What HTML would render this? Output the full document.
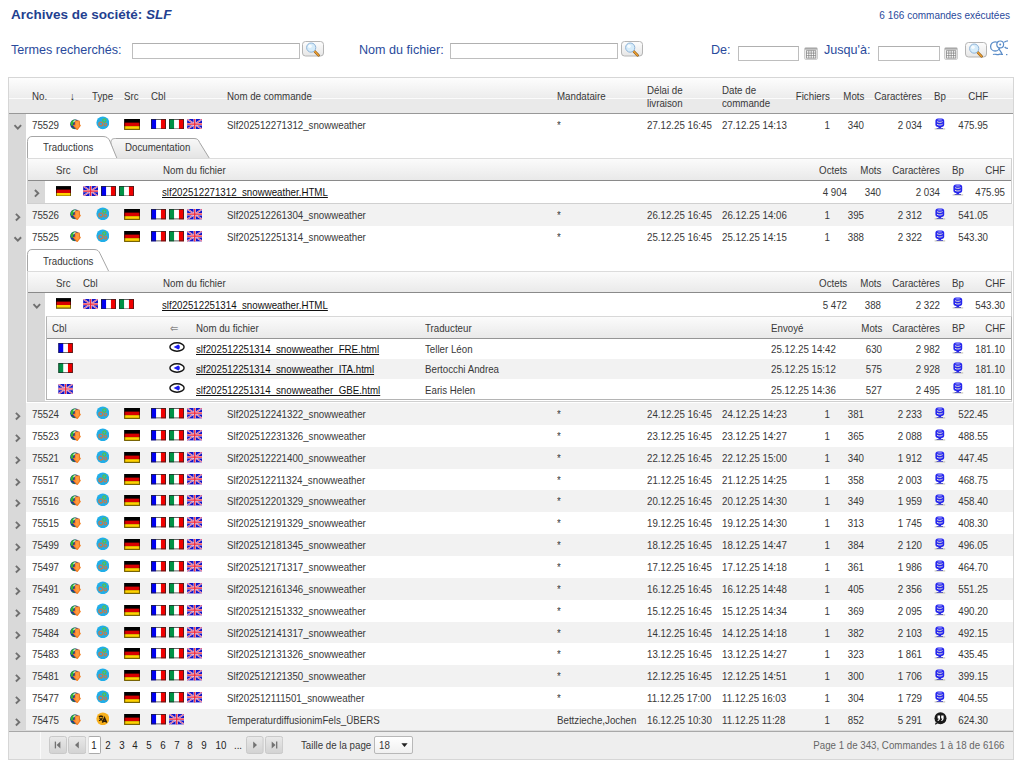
<!DOCTYPE html>
<html lang="fr"><head><meta charset="utf-8"><title>Archives de société: SLF</title>
<style>
html,body{margin:0;padding:0;background:#fff}
body{width:1024px;height:768px;position:relative;overflow:hidden;font-family:"Liberation Sans",sans-serif}
.a{position:absolute;display:block}
.t{position:absolute;white-space:nowrap;font-size:10.8px;line-height:14px;height:14px;color:#383838;transform:scaleX(.9);transform-origin:0 50%}
.t.r{transform-origin:100% 50%}
.t.c{transform-origin:50% 50%;text-align:center;color:#222}
.t.u{text-decoration:underline;color:#111}
.title{position:absolute;font-weight:bold;font-size:13.5px;line-height:18px;color:#233f90;white-space:nowrap}
.cnt{position:absolute;font-size:10px;line-height:14px;color:#2a4a9c;white-space:nowrap}
.lbl{position:absolute;font-size:12.6px;line-height:16px;color:#2a4a9c;white-space:nowrap}
.inp{position:absolute;box-sizing:border-box;margin:0;padding:0;outline:0;border-radius:0;-webkit-appearance:none;appearance:none;font:10px "Liberation Sans",sans-serif;border:1.4px solid #bebebe;border-top-color:#b0b0b0;background:#fff}
.hdr{background:linear-gradient(#fdfdfd 0,#ececec 20px,#fbfbfb 20px,#fbfbfb 21px,#eaeaea 21px,#eaeaea 100%)}
.nh{background:linear-gradient(#fcfcfc 0,#e9e9e9 100%)}
</style></head>
<body>
<div class="title" style="left:11px;top:6px">Archives de société: <i>SLF</i></div>
<div class="cnt" style="right:14px;top:9px">6 166 commandes exécutées</div>
<div class="lbl" style="left:11px;top:42px">Termes recherchés:</div>
<input class="inp" type="text" style="left:131.6px;top:43px;width:168px;height:15.5px">
<svg class="a" style="left:302px;top:41px" width="24" height="18" viewBox="0 0 24 18"><defs><linearGradient id="g302" x1="0" y1="0" x2="0" y2="1"><stop offset="0" stop-color="#fdfdfd"/><stop offset="1" stop-color="#e6e6e6"/></linearGradient></defs><rect x=".5" y=".5" width="21" height="14.5" rx="3" fill="url(#g302)" stroke="#b4b4b4"/><path d="M12.2 9.8L16.6 14.4" stroke="#8a5a18" stroke-width="2.6" stroke-linecap="round"/><path d="M12.2 9.8L16.4 14.2" stroke="#f0a030" stroke-width="1.4" stroke-linecap="round"/><circle cx="9.2" cy="6.6" r="4.6" fill="#d6ecfa" stroke="#8fb4d8" stroke-width="1"/><circle cx="8" cy="5.2" r="1.8" fill="#fff" fill-opacity=".8"/></svg>
<div class="lbl" style="left:359px;top:42px">Nom du fichier:</div>
<input class="inp" type="text" style="left:449.6px;top:43px;width:168px;height:15.5px">
<svg class="a" style="left:621px;top:41px" width="24" height="18" viewBox="0 0 24 18"><defs><linearGradient id="g621" x1="0" y1="0" x2="0" y2="1"><stop offset="0" stop-color="#fdfdfd"/><stop offset="1" stop-color="#e6e6e6"/></linearGradient></defs><rect x=".5" y=".5" width="21" height="14.5" rx="3" fill="url(#g621)" stroke="#b4b4b4"/><path d="M12.2 9.8L16.6 14.4" stroke="#8a5a18" stroke-width="2.6" stroke-linecap="round"/><path d="M12.2 9.8L16.4 14.2" stroke="#f0a030" stroke-width="1.4" stroke-linecap="round"/><circle cx="9.2" cy="6.6" r="4.6" fill="#d6ecfa" stroke="#8fb4d8" stroke-width="1"/><circle cx="8" cy="5.2" r="1.8" fill="#fff" fill-opacity=".8"/></svg>
<div class="lbl" style="left:711px;top:42px">De:</div>
<input class="inp" type="text" style="left:737.5px;top:45.5px;width:61.5px;height:15px">
<svg class="a" style="left:804px;top:47px" width="14" height="13" viewBox="0 0 14 13"><rect x=".5" y=".5" width="13" height="12" rx="1.5" fill="#ececec" stroke="#cfcfcf"/><rect x="1" y="1" width="12" height="1.6" fill="#a8a8a8"/><rect x="2.4" y="3.6" width="9.4" height="7.6" fill="#fff"/><path d="M2.4 6.1H11.8M2.4 8.6H11.8M2.4 11.1H11.8M4.8 3.6V11.2M7.2 3.6V11.2M9.6 3.6V11.2M11.7 3.6V11.2M2.5 3.6V11.2M2.4 3.7H11.8" stroke="#7a7a7a" stroke-width=".7"/></svg>
<div class="lbl" style="left:824px;top:42px">Jusqu'à:</div>
<input class="inp" type="text" style="left:878px;top:45.5px;width:61.5px;height:15px">
<svg class="a" style="left:944px;top:47px" width="14" height="13" viewBox="0 0 14 13"><rect x=".5" y=".5" width="13" height="12" rx="1.5" fill="#ececec" stroke="#cfcfcf"/><rect x="1" y="1" width="12" height="1.6" fill="#a8a8a8"/><rect x="2.4" y="3.6" width="9.4" height="7.6" fill="#fff"/><path d="M2.4 6.1H11.8M2.4 8.6H11.8M2.4 11.1H11.8M4.8 3.6V11.2M7.2 3.6V11.2M9.6 3.6V11.2M11.7 3.6V11.2M2.5 3.6V11.2M2.4 3.7H11.8" stroke="#7a7a7a" stroke-width=".7"/></svg>
<svg class="a" style="left:965px;top:42px" width="24" height="18" viewBox="0 0 24 18"><defs><linearGradient id="g965" x1="0" y1="0" x2="0" y2="1"><stop offset="0" stop-color="#fdfdfd"/><stop offset="1" stop-color="#e6e6e6"/></linearGradient></defs><rect x=".5" y=".5" width="21" height="14.5" rx="3" fill="url(#g965)" stroke="#b4b4b4"/><path d="M12.2 9.8L16.6 14.4" stroke="#8a5a18" stroke-width="2.6" stroke-linecap="round"/><path d="M12.2 9.8L16.4 14.2" stroke="#f0a030" stroke-width="1.4" stroke-linecap="round"/><circle cx="9.2" cy="6.6" r="4.6" fill="#d6ecfa" stroke="#8fb4d8" stroke-width="1"/><circle cx="8" cy="5.2" r="1.8" fill="#fff" fill-opacity=".8"/></svg>
<svg class="a" style="left:989px;top:40px" width="19" height="17" viewBox="0 0 19 17"><circle cx="6.2" cy="6.4" r="4.6" fill="none" stroke="#5a8cc8" stroke-width="1.3"/><circle cx="11.2" cy="4.4" r="3.4" fill="#fff" stroke="#5a8cc8" stroke-width="1.2"/><circle cx="11.2" cy="4.4" r="1" fill="#5a8cc8"/><path d="M15.2 2.2C16.4 1.2 17.6 .8 19 .8M15.6 7C16.6 8 17.8 8.4 19 8.4" stroke="#5a8cc8" stroke-width="1.2" fill="none"/><path d="M9.6 8.4L13 13.6M4 14.6C6 13.4 8 15.4 10 14.4 11.2 13.8 12.6 14.6 14 14.4" stroke="#5a8cc8" stroke-width="1.2" fill="none"/><rect x="17" y="14" width="1.4" height="1.2" fill="#5a8cc8"/></svg>
<div class="a" style="left:8px;top:77px;width:1006px;height:683px;border:1px solid #d6d6d6;box-sizing:border-box;background:#fff"></div>
<div class="a hdr" style="left:9px;top:78px;width:1004px;height:35px"></div>
<div class="a" style="left:9px;top:113px;width:1004px;height:1px;background:#989898;"></div>
<span class="t " style="left:31.8px;top:88.9px;">No.</span>
<span class="t " style="left:70.3px;top:88.9px;font-size:10.5px;color:#222">↓</span>
<span class="t " style="left:92.3px;top:88.9px;">Type</span>
<span class="t " style="left:124.3px;top:88.9px;">Src</span>
<span class="t " style="left:150.8px;top:88.9px;">Cbl</span>
<span class="t " style="left:227.3px;top:88.9px;">Nom de commande</span>
<span class="t " style="left:556.8px;top:88.9px;">Mandataire</span>
<span class="t " style="left:647.3px;top:82.7px;">Délai de</span>
<span class="t " style="left:647.3px;top:95.6px;">livraison</span>
<span class="t " style="left:722.3px;top:82.7px;">Date de</span>
<span class="t " style="left:722.3px;top:95.6px;">commande</span>
<span class="t r " style="right:193.8px;top:88.9px;">Fichiers</span>
<span class="t r " style="right:159.8px;top:88.9px;">Mots</span>
<span class="t r " style="right:101.8px;top:88.9px;">Caractères</span>
<span class="t " style="left:934.3px;top:88.9px;">Bp</span>
<span class="t r " style="right:35.8px;top:88.9px;">CHF</span>
<div class="a" style="left:9px;top:114px;width:17px;height:617px;background:#d9d9d9;"></div>
<span class="t " style="left:31.8px;top:117.5px;">75529</span>
<svg class="a" style="left:69.6px;top:118.9px" width="12" height="12" viewBox="0 0 12 12"><circle cx="5.1" cy="5.3" r="4.9" fill="#1a2f9a"/><path d="M.6 4C1.4 1.6 3.6.3 5.8.5 5.2 2 4.2 2.8 3.4 4.2 2.8 5.4 3.2 6.6 2 7.2 1 6.4.4 5.2.6 4Z" fill="#35b431"/><path d="M3.2 2.4C3.8 1.4 5 1 6.2 1.2 5.6 2.2 4.6 2.8 3.6 3.6Z" fill="#c8f0ff"/><path d="M1.6 8.4C3 8.2 4.2 9 4.8 10 3.6 10 2.4 9.4 1.6 8.4Z" fill="#2a8a3a"/><path d="M4.7 2.4C4.7 1.8 5.1 1.5 5.7 1.5H8.9C9.5 1.5 9.9 1.9 9.9 2.5V5.8H10.3C10.9 5.8 11 6.4 10.6 6.9L7.8 10.7C7.4 11.1 6.9 11.1 6.5 10.7L3.3 6.9C2.9 6.4 3.1 5.8 3.7 5.8H4.7Z" fill="#f47e20"/><path d="M5.7 2.6H8.9V6.7H9.5L7.2 9.7 4.7 6.7H5.7Z" fill="#ff9a40"/></svg>
<svg class="a" style="left:95.7px;top:116.2px" width="13.6" height="13.6" viewBox="-.1 -.1 14.2 14.2"><circle cx="7" cy="7" r="6.7" fill="#20aee8"/><circle cx="8.6" cy="4.6" r="1.7" fill="none" stroke="#56c24a" stroke-width="1.3"/><circle cx="4.9" cy="8.3" r="2" fill="none" stroke="#c07c50" stroke-width="1.4"/><circle cx="9.7" cy="8.9" r="1.4" fill="none" stroke="#c07c50" stroke-width="1.1"/></svg>
<svg class="a" style="left:124px;top:118.9px" width="16.2" height="10.8" viewBox="0 0 16 11"><rect width="16" height="11" fill="#000"/><rect y="3.7" width="16" height="3.6" fill="#d80000"/><rect y="7.3" width="16" height="3.7" fill="#ffd200"/><rect x=".5" y=".5" width="15" height="10" fill="none" stroke="#000" stroke-opacity=".55"/></svg>
<svg class="a" style="left:151px;top:119.1px" width="15" height="10.4" viewBox="0 0 16 11"><rect width="16" height="11" fill="#fff"/><rect width="5.4" height="11" fill="#0000f0"/><rect x="10.6" width="5.4" height="11" fill="#f00000"/><rect x=".5" y=".5" width="15" height="10" fill="none" stroke="#222" stroke-opacity=".75"/></svg>
<svg class="a" style="left:169px;top:119.1px" width="15" height="10.4" viewBox="0 0 16 11"><rect width="16" height="11" fill="#fff"/><rect width="5.4" height="11" fill="#009246"/><rect x="10.6" width="5.4" height="11" fill="#f00000"/><rect x=".5" y=".5" width="15" height="10" fill="none" stroke="#222" stroke-opacity=".75"/></svg>
<svg class="a" style="left:186.6px;top:119.1px" width="15.4" height="10.4" viewBox="0 0 16 11"><rect width="16" height="11" fill="#1414c8"/><path d="M0 0L16 11M16 0L0 11" stroke="#d8d0f4" stroke-width="1.7"/><path d="M0 0L16 11M16 0L0 11" stroke="#f0506a" stroke-width=".9"/><path d="M8 0V11M0 5.5H16" stroke="#ecd8ec" stroke-width="2.5"/><path d="M8 0V11M0 5.5H16" stroke="#f02838" stroke-width="1.3"/></svg>
<span class="t " style="left:227.3px;top:117.5px;">Slf202512271312_snowweather</span>
<span class="t " style="left:556.8px;top:117.5px;">*</span>
<span class="t " style="left:647.3px;top:117.5px;">27.12.25 16:45</span>
<span class="t " style="left:722.3px;top:117.5px;">27.12.25 14:13</span>
<span class="t r " style="right:193.8px;top:117.5px;">1</span>
<span class="t r " style="right:159.8px;top:117.5px;">340</span>
<span class="t r " style="right:101.8px;top:117.5px;">2 034</span>
<svg class="a" style="left:934.2px;top:117.9px" width="12" height="12" viewBox="0 0 12 12"><rect x="1.4" y=".5" width="8.8" height="8.4" rx="2.6" fill="#2626ee"/><ellipse cx="5.8" cy="1.9" rx="2.6" ry=".8" fill="#7a7af8"/><path d="M3 3.6C4.2 4.6 7.4 4.6 8.6 3.6M3 6.2C4.2 7.3 7.4 7.3 8.6 6.2" stroke="#e8e8d8" stroke-width="1" fill="none"/><path d="M4.8 8.6H6.8L7.6 10.6H4Z" fill="#2626ee"/><rect x="2.6" y="10" width="6.4" height="1" fill="#2626ee"/><rect x=".6" y="10.6" width="10.6" height=".7" fill="#a0a090"/></svg>
<span class="t r " style="right:35.8px;top:117.5px;">475.95</span>
<div class="a" style="left:26px;top:204px;width:987px;height:22px;background:#f2f2f2;"></div>
<span class="t " style="left:31.8px;top:207.55px;">75526</span>
<svg class="a" style="left:69.6px;top:208.95px" width="12" height="12" viewBox="0 0 12 12"><circle cx="5.1" cy="5.3" r="4.9" fill="#1a2f9a"/><path d="M.6 4C1.4 1.6 3.6.3 5.8.5 5.2 2 4.2 2.8 3.4 4.2 2.8 5.4 3.2 6.6 2 7.2 1 6.4.4 5.2.6 4Z" fill="#35b431"/><path d="M3.2 2.4C3.8 1.4 5 1 6.2 1.2 5.6 2.2 4.6 2.8 3.6 3.6Z" fill="#c8f0ff"/><path d="M1.6 8.4C3 8.2 4.2 9 4.8 10 3.6 10 2.4 9.4 1.6 8.4Z" fill="#2a8a3a"/><path d="M4.7 2.4C4.7 1.8 5.1 1.5 5.7 1.5H8.9C9.5 1.5 9.9 1.9 9.9 2.5V5.8H10.3C10.9 5.8 11 6.4 10.6 6.9L7.8 10.7C7.4 11.1 6.9 11.1 6.5 10.7L3.3 6.9C2.9 6.4 3.1 5.8 3.7 5.8H4.7Z" fill="#f47e20"/><path d="M5.7 2.6H8.9V6.7H9.5L7.2 9.7 4.7 6.7H5.7Z" fill="#ff9a40"/></svg>
<svg class="a" style="left:95.7px;top:206.75px" width="13.6" height="13.6" viewBox="-.1 -.1 14.2 14.2"><circle cx="7" cy="7" r="6.7" fill="#20aee8"/><circle cx="8.6" cy="4.6" r="1.7" fill="none" stroke="#56c24a" stroke-width="1.3"/><circle cx="4.9" cy="8.3" r="2" fill="none" stroke="#c07c50" stroke-width="1.4"/><circle cx="9.7" cy="8.9" r="1.4" fill="none" stroke="#c07c50" stroke-width="1.1"/></svg>
<svg class="a" style="left:124px;top:208.95px" width="16.2" height="10.8" viewBox="0 0 16 11"><rect width="16" height="11" fill="#000"/><rect y="3.7" width="16" height="3.6" fill="#d80000"/><rect y="7.3" width="16" height="3.7" fill="#ffd200"/><rect x=".5" y=".5" width="15" height="10" fill="none" stroke="#000" stroke-opacity=".55"/></svg>
<svg class="a" style="left:151px;top:209.15px" width="15" height="10.4" viewBox="0 0 16 11"><rect width="16" height="11" fill="#fff"/><rect width="5.4" height="11" fill="#0000f0"/><rect x="10.6" width="5.4" height="11" fill="#f00000"/><rect x=".5" y=".5" width="15" height="10" fill="none" stroke="#222" stroke-opacity=".75"/></svg>
<svg class="a" style="left:169px;top:209.15px" width="15" height="10.4" viewBox="0 0 16 11"><rect width="16" height="11" fill="#fff"/><rect width="5.4" height="11" fill="#009246"/><rect x="10.6" width="5.4" height="11" fill="#f00000"/><rect x=".5" y=".5" width="15" height="10" fill="none" stroke="#222" stroke-opacity=".75"/></svg>
<svg class="a" style="left:186.6px;top:209.15px" width="15.4" height="10.4" viewBox="0 0 16 11"><rect width="16" height="11" fill="#1414c8"/><path d="M0 0L16 11M16 0L0 11" stroke="#d8d0f4" stroke-width="1.7"/><path d="M0 0L16 11M16 0L0 11" stroke="#f0506a" stroke-width=".9"/><path d="M8 0V11M0 5.5H16" stroke="#ecd8ec" stroke-width="2.5"/><path d="M8 0V11M0 5.5H16" stroke="#f02838" stroke-width="1.3"/></svg>
<span class="t " style="left:227.3px;top:207.55px;">Slf202512261304_snowweather</span>
<span class="t " style="left:556.8px;top:207.55px;">*</span>
<span class="t " style="left:647.3px;top:207.55px;">26.12.25 16:45</span>
<span class="t " style="left:722.3px;top:207.55px;">26.12.25 14:06</span>
<span class="t r " style="right:193.8px;top:207.55px;">1</span>
<span class="t r " style="right:159.8px;top:207.55px;">395</span>
<span class="t r " style="right:101.8px;top:207.55px;">2 312</span>
<svg class="a" style="left:934.2px;top:207.95px" width="12" height="12" viewBox="0 0 12 12"><rect x="1.4" y=".5" width="8.8" height="8.4" rx="2.6" fill="#2626ee"/><ellipse cx="5.8" cy="1.9" rx="2.6" ry=".8" fill="#7a7af8"/><path d="M3 3.6C4.2 4.6 7.4 4.6 8.6 3.6M3 6.2C4.2 7.3 7.4 7.3 8.6 6.2" stroke="#e8e8d8" stroke-width="1" fill="none"/><path d="M4.8 8.6H6.8L7.6 10.6H4Z" fill="#2626ee"/><rect x="2.6" y="10" width="6.4" height="1" fill="#2626ee"/><rect x=".6" y="10.6" width="10.6" height=".7" fill="#a0a090"/></svg>
<span class="t r " style="right:35.8px;top:207.55px;">541.05</span>
<span class="t " style="left:31.8px;top:229.55px;">75525</span>
<svg class="a" style="left:69.6px;top:230.95px" width="12" height="12" viewBox="0 0 12 12"><circle cx="5.1" cy="5.3" r="4.9" fill="#1a2f9a"/><path d="M.6 4C1.4 1.6 3.6.3 5.8.5 5.2 2 4.2 2.8 3.4 4.2 2.8 5.4 3.2 6.6 2 7.2 1 6.4.4 5.2.6 4Z" fill="#35b431"/><path d="M3.2 2.4C3.8 1.4 5 1 6.2 1.2 5.6 2.2 4.6 2.8 3.6 3.6Z" fill="#c8f0ff"/><path d="M1.6 8.4C3 8.2 4.2 9 4.8 10 3.6 10 2.4 9.4 1.6 8.4Z" fill="#2a8a3a"/><path d="M4.7 2.4C4.7 1.8 5.1 1.5 5.7 1.5H8.9C9.5 1.5 9.9 1.9 9.9 2.5V5.8H10.3C10.9 5.8 11 6.4 10.6 6.9L7.8 10.7C7.4 11.1 6.9 11.1 6.5 10.7L3.3 6.9C2.9 6.4 3.1 5.8 3.7 5.8H4.7Z" fill="#f47e20"/><path d="M5.7 2.6H8.9V6.7H9.5L7.2 9.7 4.7 6.7H5.7Z" fill="#ff9a40"/></svg>
<svg class="a" style="left:95.7px;top:228.75px" width="13.6" height="13.6" viewBox="-.1 -.1 14.2 14.2"><circle cx="7" cy="7" r="6.7" fill="#20aee8"/><circle cx="8.6" cy="4.6" r="1.7" fill="none" stroke="#56c24a" stroke-width="1.3"/><circle cx="4.9" cy="8.3" r="2" fill="none" stroke="#c07c50" stroke-width="1.4"/><circle cx="9.7" cy="8.9" r="1.4" fill="none" stroke="#c07c50" stroke-width="1.1"/></svg>
<svg class="a" style="left:124px;top:230.95px" width="16.2" height="10.8" viewBox="0 0 16 11"><rect width="16" height="11" fill="#000"/><rect y="3.7" width="16" height="3.6" fill="#d80000"/><rect y="7.3" width="16" height="3.7" fill="#ffd200"/><rect x=".5" y=".5" width="15" height="10" fill="none" stroke="#000" stroke-opacity=".55"/></svg>
<svg class="a" style="left:151px;top:231.15px" width="15" height="10.4" viewBox="0 0 16 11"><rect width="16" height="11" fill="#fff"/><rect width="5.4" height="11" fill="#0000f0"/><rect x="10.6" width="5.4" height="11" fill="#f00000"/><rect x=".5" y=".5" width="15" height="10" fill="none" stroke="#222" stroke-opacity=".75"/></svg>
<svg class="a" style="left:169px;top:231.15px" width="15" height="10.4" viewBox="0 0 16 11"><rect width="16" height="11" fill="#fff"/><rect width="5.4" height="11" fill="#009246"/><rect x="10.6" width="5.4" height="11" fill="#f00000"/><rect x=".5" y=".5" width="15" height="10" fill="none" stroke="#222" stroke-opacity=".75"/></svg>
<svg class="a" style="left:186.6px;top:231.15px" width="15.4" height="10.4" viewBox="0 0 16 11"><rect width="16" height="11" fill="#1414c8"/><path d="M0 0L16 11M16 0L0 11" stroke="#d8d0f4" stroke-width="1.7"/><path d="M0 0L16 11M16 0L0 11" stroke="#f0506a" stroke-width=".9"/><path d="M8 0V11M0 5.5H16" stroke="#ecd8ec" stroke-width="2.5"/><path d="M8 0V11M0 5.5H16" stroke="#f02838" stroke-width="1.3"/></svg>
<span class="t " style="left:227.3px;top:229.55px;">Slf202512251314_snowweather</span>
<span class="t " style="left:556.8px;top:229.55px;">*</span>
<span class="t " style="left:647.3px;top:229.55px;">25.12.25 16:45</span>
<span class="t " style="left:722.3px;top:229.55px;">25.12.25 14:15</span>
<span class="t r " style="right:193.8px;top:229.55px;">1</span>
<span class="t r " style="right:159.8px;top:229.55px;">388</span>
<span class="t r " style="right:101.8px;top:229.55px;">2 322</span>
<svg class="a" style="left:934.2px;top:229.95px" width="12" height="12" viewBox="0 0 12 12"><rect x="1.4" y=".5" width="8.8" height="8.4" rx="2.6" fill="#2626ee"/><ellipse cx="5.8" cy="1.9" rx="2.6" ry=".8" fill="#7a7af8"/><path d="M3 3.6C4.2 4.6 7.4 4.6 8.6 3.6M3 6.2C4.2 7.3 7.4 7.3 8.6 6.2" stroke="#e8e8d8" stroke-width="1" fill="none"/><path d="M4.8 8.6H6.8L7.6 10.6H4Z" fill="#2626ee"/><rect x="2.6" y="10" width="6.4" height="1" fill="#2626ee"/><rect x=".6" y="10.6" width="10.6" height=".7" fill="#a0a090"/></svg>
<span class="t r " style="right:35.8px;top:229.55px;">543.30</span>
<div class="a" style="left:26px;top:403px;width:987px;height:22px;background:#f2f2f2;"></div>
<span class="t " style="left:31.8px;top:406.55px;">75524</span>
<svg class="a" style="left:69.6px;top:407.95px" width="12" height="12" viewBox="0 0 12 12"><circle cx="5.1" cy="5.3" r="4.9" fill="#1a2f9a"/><path d="M.6 4C1.4 1.6 3.6.3 5.8.5 5.2 2 4.2 2.8 3.4 4.2 2.8 5.4 3.2 6.6 2 7.2 1 6.4.4 5.2.6 4Z" fill="#35b431"/><path d="M3.2 2.4C3.8 1.4 5 1 6.2 1.2 5.6 2.2 4.6 2.8 3.6 3.6Z" fill="#c8f0ff"/><path d="M1.6 8.4C3 8.2 4.2 9 4.8 10 3.6 10 2.4 9.4 1.6 8.4Z" fill="#2a8a3a"/><path d="M4.7 2.4C4.7 1.8 5.1 1.5 5.7 1.5H8.9C9.5 1.5 9.9 1.9 9.9 2.5V5.8H10.3C10.9 5.8 11 6.4 10.6 6.9L7.8 10.7C7.4 11.1 6.9 11.1 6.5 10.7L3.3 6.9C2.9 6.4 3.1 5.8 3.7 5.8H4.7Z" fill="#f47e20"/><path d="M5.7 2.6H8.9V6.7H9.5L7.2 9.7 4.7 6.7H5.7Z" fill="#ff9a40"/></svg>
<svg class="a" style="left:95.7px;top:405.75px" width="13.6" height="13.6" viewBox="-.1 -.1 14.2 14.2"><circle cx="7" cy="7" r="6.7" fill="#20aee8"/><circle cx="8.6" cy="4.6" r="1.7" fill="none" stroke="#56c24a" stroke-width="1.3"/><circle cx="4.9" cy="8.3" r="2" fill="none" stroke="#c07c50" stroke-width="1.4"/><circle cx="9.7" cy="8.9" r="1.4" fill="none" stroke="#c07c50" stroke-width="1.1"/></svg>
<svg class="a" style="left:124px;top:407.95px" width="16.2" height="10.8" viewBox="0 0 16 11"><rect width="16" height="11" fill="#000"/><rect y="3.7" width="16" height="3.6" fill="#d80000"/><rect y="7.3" width="16" height="3.7" fill="#ffd200"/><rect x=".5" y=".5" width="15" height="10" fill="none" stroke="#000" stroke-opacity=".55"/></svg>
<svg class="a" style="left:151px;top:408.15px" width="15" height="10.4" viewBox="0 0 16 11"><rect width="16" height="11" fill="#fff"/><rect width="5.4" height="11" fill="#0000f0"/><rect x="10.6" width="5.4" height="11" fill="#f00000"/><rect x=".5" y=".5" width="15" height="10" fill="none" stroke="#222" stroke-opacity=".75"/></svg>
<svg class="a" style="left:169px;top:408.15px" width="15" height="10.4" viewBox="0 0 16 11"><rect width="16" height="11" fill="#fff"/><rect width="5.4" height="11" fill="#009246"/><rect x="10.6" width="5.4" height="11" fill="#f00000"/><rect x=".5" y=".5" width="15" height="10" fill="none" stroke="#222" stroke-opacity=".75"/></svg>
<svg class="a" style="left:186.6px;top:408.15px" width="15.4" height="10.4" viewBox="0 0 16 11"><rect width="16" height="11" fill="#1414c8"/><path d="M0 0L16 11M16 0L0 11" stroke="#d8d0f4" stroke-width="1.7"/><path d="M0 0L16 11M16 0L0 11" stroke="#f0506a" stroke-width=".9"/><path d="M8 0V11M0 5.5H16" stroke="#ecd8ec" stroke-width="2.5"/><path d="M8 0V11M0 5.5H16" stroke="#f02838" stroke-width="1.3"/></svg>
<span class="t " style="left:227.3px;top:406.55px;">Slf202512241322_snowweather</span>
<span class="t " style="left:556.8px;top:406.55px;">*</span>
<span class="t " style="left:647.3px;top:406.55px;">24.12.25 16:45</span>
<span class="t " style="left:722.3px;top:406.55px;">24.12.25 14:23</span>
<span class="t r " style="right:193.8px;top:406.55px;">1</span>
<span class="t r " style="right:159.8px;top:406.55px;">381</span>
<span class="t r " style="right:101.8px;top:406.55px;">2 233</span>
<svg class="a" style="left:934.2px;top:406.95px" width="12" height="12" viewBox="0 0 12 12"><rect x="1.4" y=".5" width="8.8" height="8.4" rx="2.6" fill="#2626ee"/><ellipse cx="5.8" cy="1.9" rx="2.6" ry=".8" fill="#7a7af8"/><path d="M3 3.6C4.2 4.6 7.4 4.6 8.6 3.6M3 6.2C4.2 7.3 7.4 7.3 8.6 6.2" stroke="#e8e8d8" stroke-width="1" fill="none"/><path d="M4.8 8.6H6.8L7.6 10.6H4Z" fill="#2626ee"/><rect x="2.6" y="10" width="6.4" height="1" fill="#2626ee"/><rect x=".6" y="10.6" width="10.6" height=".7" fill="#a0a090"/></svg>
<span class="t r " style="right:35.8px;top:406.55px;">522.45</span>
<span class="t " style="left:31.8px;top:428.55px;">75523</span>
<svg class="a" style="left:69.6px;top:429.95px" width="12" height="12" viewBox="0 0 12 12"><circle cx="5.1" cy="5.3" r="4.9" fill="#1a2f9a"/><path d="M.6 4C1.4 1.6 3.6.3 5.8.5 5.2 2 4.2 2.8 3.4 4.2 2.8 5.4 3.2 6.6 2 7.2 1 6.4.4 5.2.6 4Z" fill="#35b431"/><path d="M3.2 2.4C3.8 1.4 5 1 6.2 1.2 5.6 2.2 4.6 2.8 3.6 3.6Z" fill="#c8f0ff"/><path d="M1.6 8.4C3 8.2 4.2 9 4.8 10 3.6 10 2.4 9.4 1.6 8.4Z" fill="#2a8a3a"/><path d="M4.7 2.4C4.7 1.8 5.1 1.5 5.7 1.5H8.9C9.5 1.5 9.9 1.9 9.9 2.5V5.8H10.3C10.9 5.8 11 6.4 10.6 6.9L7.8 10.7C7.4 11.1 6.9 11.1 6.5 10.7L3.3 6.9C2.9 6.4 3.1 5.8 3.7 5.8H4.7Z" fill="#f47e20"/><path d="M5.7 2.6H8.9V6.7H9.5L7.2 9.7 4.7 6.7H5.7Z" fill="#ff9a40"/></svg>
<svg class="a" style="left:95.7px;top:427.75px" width="13.6" height="13.6" viewBox="-.1 -.1 14.2 14.2"><circle cx="7" cy="7" r="6.7" fill="#20aee8"/><circle cx="8.6" cy="4.6" r="1.7" fill="none" stroke="#56c24a" stroke-width="1.3"/><circle cx="4.9" cy="8.3" r="2" fill="none" stroke="#c07c50" stroke-width="1.4"/><circle cx="9.7" cy="8.9" r="1.4" fill="none" stroke="#c07c50" stroke-width="1.1"/></svg>
<svg class="a" style="left:124px;top:429.95px" width="16.2" height="10.8" viewBox="0 0 16 11"><rect width="16" height="11" fill="#000"/><rect y="3.7" width="16" height="3.6" fill="#d80000"/><rect y="7.3" width="16" height="3.7" fill="#ffd200"/><rect x=".5" y=".5" width="15" height="10" fill="none" stroke="#000" stroke-opacity=".55"/></svg>
<svg class="a" style="left:151px;top:430.15px" width="15" height="10.4" viewBox="0 0 16 11"><rect width="16" height="11" fill="#fff"/><rect width="5.4" height="11" fill="#0000f0"/><rect x="10.6" width="5.4" height="11" fill="#f00000"/><rect x=".5" y=".5" width="15" height="10" fill="none" stroke="#222" stroke-opacity=".75"/></svg>
<svg class="a" style="left:169px;top:430.15px" width="15" height="10.4" viewBox="0 0 16 11"><rect width="16" height="11" fill="#fff"/><rect width="5.4" height="11" fill="#009246"/><rect x="10.6" width="5.4" height="11" fill="#f00000"/><rect x=".5" y=".5" width="15" height="10" fill="none" stroke="#222" stroke-opacity=".75"/></svg>
<svg class="a" style="left:186.6px;top:430.15px" width="15.4" height="10.4" viewBox="0 0 16 11"><rect width="16" height="11" fill="#1414c8"/><path d="M0 0L16 11M16 0L0 11" stroke="#d8d0f4" stroke-width="1.7"/><path d="M0 0L16 11M16 0L0 11" stroke="#f0506a" stroke-width=".9"/><path d="M8 0V11M0 5.5H16" stroke="#ecd8ec" stroke-width="2.5"/><path d="M8 0V11M0 5.5H16" stroke="#f02838" stroke-width="1.3"/></svg>
<span class="t " style="left:227.3px;top:428.55px;">Slf202512231326_snowweather</span>
<span class="t " style="left:556.8px;top:428.55px;">*</span>
<span class="t " style="left:647.3px;top:428.55px;">23.12.25 16:45</span>
<span class="t " style="left:722.3px;top:428.55px;">23.12.25 14:27</span>
<span class="t r " style="right:193.8px;top:428.55px;">1</span>
<span class="t r " style="right:159.8px;top:428.55px;">365</span>
<span class="t r " style="right:101.8px;top:428.55px;">2 088</span>
<svg class="a" style="left:934.2px;top:428.95px" width="12" height="12" viewBox="0 0 12 12"><rect x="1.4" y=".5" width="8.8" height="8.4" rx="2.6" fill="#2626ee"/><ellipse cx="5.8" cy="1.9" rx="2.6" ry=".8" fill="#7a7af8"/><path d="M3 3.6C4.2 4.6 7.4 4.6 8.6 3.6M3 6.2C4.2 7.3 7.4 7.3 8.6 6.2" stroke="#e8e8d8" stroke-width="1" fill="none"/><path d="M4.8 8.6H6.8L7.6 10.6H4Z" fill="#2626ee"/><rect x="2.6" y="10" width="6.4" height="1" fill="#2626ee"/><rect x=".6" y="10.6" width="10.6" height=".7" fill="#a0a090"/></svg>
<span class="t r " style="right:35.8px;top:428.55px;">488.55</span>
<div class="a" style="left:26px;top:447px;width:987px;height:22px;background:#f2f2f2;"></div>
<span class="t " style="left:31.8px;top:450.55px;">75521</span>
<svg class="a" style="left:69.6px;top:451.95px" width="12" height="12" viewBox="0 0 12 12"><circle cx="5.1" cy="5.3" r="4.9" fill="#1a2f9a"/><path d="M.6 4C1.4 1.6 3.6.3 5.8.5 5.2 2 4.2 2.8 3.4 4.2 2.8 5.4 3.2 6.6 2 7.2 1 6.4.4 5.2.6 4Z" fill="#35b431"/><path d="M3.2 2.4C3.8 1.4 5 1 6.2 1.2 5.6 2.2 4.6 2.8 3.6 3.6Z" fill="#c8f0ff"/><path d="M1.6 8.4C3 8.2 4.2 9 4.8 10 3.6 10 2.4 9.4 1.6 8.4Z" fill="#2a8a3a"/><path d="M4.7 2.4C4.7 1.8 5.1 1.5 5.7 1.5H8.9C9.5 1.5 9.9 1.9 9.9 2.5V5.8H10.3C10.9 5.8 11 6.4 10.6 6.9L7.8 10.7C7.4 11.1 6.9 11.1 6.5 10.7L3.3 6.9C2.9 6.4 3.1 5.8 3.7 5.8H4.7Z" fill="#f47e20"/><path d="M5.7 2.6H8.9V6.7H9.5L7.2 9.7 4.7 6.7H5.7Z" fill="#ff9a40"/></svg>
<svg class="a" style="left:95.7px;top:449.75px" width="13.6" height="13.6" viewBox="-.1 -.1 14.2 14.2"><circle cx="7" cy="7" r="6.7" fill="#20aee8"/><circle cx="8.6" cy="4.6" r="1.7" fill="none" stroke="#56c24a" stroke-width="1.3"/><circle cx="4.9" cy="8.3" r="2" fill="none" stroke="#c07c50" stroke-width="1.4"/><circle cx="9.7" cy="8.9" r="1.4" fill="none" stroke="#c07c50" stroke-width="1.1"/></svg>
<svg class="a" style="left:124px;top:451.95px" width="16.2" height="10.8" viewBox="0 0 16 11"><rect width="16" height="11" fill="#000"/><rect y="3.7" width="16" height="3.6" fill="#d80000"/><rect y="7.3" width="16" height="3.7" fill="#ffd200"/><rect x=".5" y=".5" width="15" height="10" fill="none" stroke="#000" stroke-opacity=".55"/></svg>
<svg class="a" style="left:151px;top:452.15px" width="15" height="10.4" viewBox="0 0 16 11"><rect width="16" height="11" fill="#fff"/><rect width="5.4" height="11" fill="#0000f0"/><rect x="10.6" width="5.4" height="11" fill="#f00000"/><rect x=".5" y=".5" width="15" height="10" fill="none" stroke="#222" stroke-opacity=".75"/></svg>
<svg class="a" style="left:169px;top:452.15px" width="15" height="10.4" viewBox="0 0 16 11"><rect width="16" height="11" fill="#fff"/><rect width="5.4" height="11" fill="#009246"/><rect x="10.6" width="5.4" height="11" fill="#f00000"/><rect x=".5" y=".5" width="15" height="10" fill="none" stroke="#222" stroke-opacity=".75"/></svg>
<svg class="a" style="left:186.6px;top:452.15px" width="15.4" height="10.4" viewBox="0 0 16 11"><rect width="16" height="11" fill="#1414c8"/><path d="M0 0L16 11M16 0L0 11" stroke="#d8d0f4" stroke-width="1.7"/><path d="M0 0L16 11M16 0L0 11" stroke="#f0506a" stroke-width=".9"/><path d="M8 0V11M0 5.5H16" stroke="#ecd8ec" stroke-width="2.5"/><path d="M8 0V11M0 5.5H16" stroke="#f02838" stroke-width="1.3"/></svg>
<span class="t " style="left:227.3px;top:450.55px;">Slf202512221400_snowweather</span>
<span class="t " style="left:556.8px;top:450.55px;">*</span>
<span class="t " style="left:647.3px;top:450.55px;">22.12.25 16:45</span>
<span class="t " style="left:722.3px;top:450.55px;">22.12.25 15:00</span>
<span class="t r " style="right:193.8px;top:450.55px;">1</span>
<span class="t r " style="right:159.8px;top:450.55px;">340</span>
<span class="t r " style="right:101.8px;top:450.55px;">1 912</span>
<svg class="a" style="left:934.2px;top:450.95px" width="12" height="12" viewBox="0 0 12 12"><rect x="1.4" y=".5" width="8.8" height="8.4" rx="2.6" fill="#2626ee"/><ellipse cx="5.8" cy="1.9" rx="2.6" ry=".8" fill="#7a7af8"/><path d="M3 3.6C4.2 4.6 7.4 4.6 8.6 3.6M3 6.2C4.2 7.3 7.4 7.3 8.6 6.2" stroke="#e8e8d8" stroke-width="1" fill="none"/><path d="M4.8 8.6H6.8L7.6 10.6H4Z" fill="#2626ee"/><rect x="2.6" y="10" width="6.4" height="1" fill="#2626ee"/><rect x=".6" y="10.6" width="10.6" height=".7" fill="#a0a090"/></svg>
<span class="t r " style="right:35.8px;top:450.55px;">447.45</span>
<span class="t " style="left:31.8px;top:472.55px;">75517</span>
<svg class="a" style="left:69.6px;top:473.95px" width="12" height="12" viewBox="0 0 12 12"><circle cx="5.1" cy="5.3" r="4.9" fill="#1a2f9a"/><path d="M.6 4C1.4 1.6 3.6.3 5.8.5 5.2 2 4.2 2.8 3.4 4.2 2.8 5.4 3.2 6.6 2 7.2 1 6.4.4 5.2.6 4Z" fill="#35b431"/><path d="M3.2 2.4C3.8 1.4 5 1 6.2 1.2 5.6 2.2 4.6 2.8 3.6 3.6Z" fill="#c8f0ff"/><path d="M1.6 8.4C3 8.2 4.2 9 4.8 10 3.6 10 2.4 9.4 1.6 8.4Z" fill="#2a8a3a"/><path d="M4.7 2.4C4.7 1.8 5.1 1.5 5.7 1.5H8.9C9.5 1.5 9.9 1.9 9.9 2.5V5.8H10.3C10.9 5.8 11 6.4 10.6 6.9L7.8 10.7C7.4 11.1 6.9 11.1 6.5 10.7L3.3 6.9C2.9 6.4 3.1 5.8 3.7 5.8H4.7Z" fill="#f47e20"/><path d="M5.7 2.6H8.9V6.7H9.5L7.2 9.7 4.7 6.7H5.7Z" fill="#ff9a40"/></svg>
<svg class="a" style="left:95.7px;top:471.75px" width="13.6" height="13.6" viewBox="-.1 -.1 14.2 14.2"><circle cx="7" cy="7" r="6.7" fill="#20aee8"/><circle cx="8.6" cy="4.6" r="1.7" fill="none" stroke="#56c24a" stroke-width="1.3"/><circle cx="4.9" cy="8.3" r="2" fill="none" stroke="#c07c50" stroke-width="1.4"/><circle cx="9.7" cy="8.9" r="1.4" fill="none" stroke="#c07c50" stroke-width="1.1"/></svg>
<svg class="a" style="left:124px;top:473.95px" width="16.2" height="10.8" viewBox="0 0 16 11"><rect width="16" height="11" fill="#000"/><rect y="3.7" width="16" height="3.6" fill="#d80000"/><rect y="7.3" width="16" height="3.7" fill="#ffd200"/><rect x=".5" y=".5" width="15" height="10" fill="none" stroke="#000" stroke-opacity=".55"/></svg>
<svg class="a" style="left:151px;top:474.15px" width="15" height="10.4" viewBox="0 0 16 11"><rect width="16" height="11" fill="#fff"/><rect width="5.4" height="11" fill="#0000f0"/><rect x="10.6" width="5.4" height="11" fill="#f00000"/><rect x=".5" y=".5" width="15" height="10" fill="none" stroke="#222" stroke-opacity=".75"/></svg>
<svg class="a" style="left:169px;top:474.15px" width="15" height="10.4" viewBox="0 0 16 11"><rect width="16" height="11" fill="#fff"/><rect width="5.4" height="11" fill="#009246"/><rect x="10.6" width="5.4" height="11" fill="#f00000"/><rect x=".5" y=".5" width="15" height="10" fill="none" stroke="#222" stroke-opacity=".75"/></svg>
<svg class="a" style="left:186.6px;top:474.15px" width="15.4" height="10.4" viewBox="0 0 16 11"><rect width="16" height="11" fill="#1414c8"/><path d="M0 0L16 11M16 0L0 11" stroke="#d8d0f4" stroke-width="1.7"/><path d="M0 0L16 11M16 0L0 11" stroke="#f0506a" stroke-width=".9"/><path d="M8 0V11M0 5.5H16" stroke="#ecd8ec" stroke-width="2.5"/><path d="M8 0V11M0 5.5H16" stroke="#f02838" stroke-width="1.3"/></svg>
<span class="t " style="left:227.3px;top:472.55px;">Slf202512211324_snowweather</span>
<span class="t " style="left:556.8px;top:472.55px;">*</span>
<span class="t " style="left:647.3px;top:472.55px;">21.12.25 16:45</span>
<span class="t " style="left:722.3px;top:472.55px;">21.12.25 14:25</span>
<span class="t r " style="right:193.8px;top:472.55px;">1</span>
<span class="t r " style="right:159.8px;top:472.55px;">358</span>
<span class="t r " style="right:101.8px;top:472.55px;">2 003</span>
<svg class="a" style="left:934.2px;top:472.95px" width="12" height="12" viewBox="0 0 12 12"><rect x="1.4" y=".5" width="8.8" height="8.4" rx="2.6" fill="#2626ee"/><ellipse cx="5.8" cy="1.9" rx="2.6" ry=".8" fill="#7a7af8"/><path d="M3 3.6C4.2 4.6 7.4 4.6 8.6 3.6M3 6.2C4.2 7.3 7.4 7.3 8.6 6.2" stroke="#e8e8d8" stroke-width="1" fill="none"/><path d="M4.8 8.6H6.8L7.6 10.6H4Z" fill="#2626ee"/><rect x="2.6" y="10" width="6.4" height="1" fill="#2626ee"/><rect x=".6" y="10.6" width="10.6" height=".7" fill="#a0a090"/></svg>
<span class="t r " style="right:35.8px;top:472.55px;">468.75</span>
<div class="a" style="left:26px;top:490px;width:987px;height:22px;background:#f2f2f2;"></div>
<span class="t " style="left:31.8px;top:493.55px;">75516</span>
<svg class="a" style="left:69.6px;top:494.95px" width="12" height="12" viewBox="0 0 12 12"><circle cx="5.1" cy="5.3" r="4.9" fill="#1a2f9a"/><path d="M.6 4C1.4 1.6 3.6.3 5.8.5 5.2 2 4.2 2.8 3.4 4.2 2.8 5.4 3.2 6.6 2 7.2 1 6.4.4 5.2.6 4Z" fill="#35b431"/><path d="M3.2 2.4C3.8 1.4 5 1 6.2 1.2 5.6 2.2 4.6 2.8 3.6 3.6Z" fill="#c8f0ff"/><path d="M1.6 8.4C3 8.2 4.2 9 4.8 10 3.6 10 2.4 9.4 1.6 8.4Z" fill="#2a8a3a"/><path d="M4.7 2.4C4.7 1.8 5.1 1.5 5.7 1.5H8.9C9.5 1.5 9.9 1.9 9.9 2.5V5.8H10.3C10.9 5.8 11 6.4 10.6 6.9L7.8 10.7C7.4 11.1 6.9 11.1 6.5 10.7L3.3 6.9C2.9 6.4 3.1 5.8 3.7 5.8H4.7Z" fill="#f47e20"/><path d="M5.7 2.6H8.9V6.7H9.5L7.2 9.7 4.7 6.7H5.7Z" fill="#ff9a40"/></svg>
<svg class="a" style="left:95.7px;top:492.75px" width="13.6" height="13.6" viewBox="-.1 -.1 14.2 14.2"><circle cx="7" cy="7" r="6.7" fill="#20aee8"/><circle cx="8.6" cy="4.6" r="1.7" fill="none" stroke="#56c24a" stroke-width="1.3"/><circle cx="4.9" cy="8.3" r="2" fill="none" stroke="#c07c50" stroke-width="1.4"/><circle cx="9.7" cy="8.9" r="1.4" fill="none" stroke="#c07c50" stroke-width="1.1"/></svg>
<svg class="a" style="left:124px;top:494.95px" width="16.2" height="10.8" viewBox="0 0 16 11"><rect width="16" height="11" fill="#000"/><rect y="3.7" width="16" height="3.6" fill="#d80000"/><rect y="7.3" width="16" height="3.7" fill="#ffd200"/><rect x=".5" y=".5" width="15" height="10" fill="none" stroke="#000" stroke-opacity=".55"/></svg>
<svg class="a" style="left:151px;top:495.15px" width="15" height="10.4" viewBox="0 0 16 11"><rect width="16" height="11" fill="#fff"/><rect width="5.4" height="11" fill="#0000f0"/><rect x="10.6" width="5.4" height="11" fill="#f00000"/><rect x=".5" y=".5" width="15" height="10" fill="none" stroke="#222" stroke-opacity=".75"/></svg>
<svg class="a" style="left:169px;top:495.15px" width="15" height="10.4" viewBox="0 0 16 11"><rect width="16" height="11" fill="#fff"/><rect width="5.4" height="11" fill="#009246"/><rect x="10.6" width="5.4" height="11" fill="#f00000"/><rect x=".5" y=".5" width="15" height="10" fill="none" stroke="#222" stroke-opacity=".75"/></svg>
<svg class="a" style="left:186.6px;top:495.15px" width="15.4" height="10.4" viewBox="0 0 16 11"><rect width="16" height="11" fill="#1414c8"/><path d="M0 0L16 11M16 0L0 11" stroke="#d8d0f4" stroke-width="1.7"/><path d="M0 0L16 11M16 0L0 11" stroke="#f0506a" stroke-width=".9"/><path d="M8 0V11M0 5.5H16" stroke="#ecd8ec" stroke-width="2.5"/><path d="M8 0V11M0 5.5H16" stroke="#f02838" stroke-width="1.3"/></svg>
<span class="t " style="left:227.3px;top:493.55px;">Slf202512201329_snowweather</span>
<span class="t " style="left:556.8px;top:493.55px;">*</span>
<span class="t " style="left:647.3px;top:493.55px;">20.12.25 16:45</span>
<span class="t " style="left:722.3px;top:493.55px;">20.12.25 14:30</span>
<span class="t r " style="right:193.8px;top:493.55px;">1</span>
<span class="t r " style="right:159.8px;top:493.55px;">349</span>
<span class="t r " style="right:101.8px;top:493.55px;">1 959</span>
<svg class="a" style="left:934.2px;top:493.95px" width="12" height="12" viewBox="0 0 12 12"><rect x="1.4" y=".5" width="8.8" height="8.4" rx="2.6" fill="#2626ee"/><ellipse cx="5.8" cy="1.9" rx="2.6" ry=".8" fill="#7a7af8"/><path d="M3 3.6C4.2 4.6 7.4 4.6 8.6 3.6M3 6.2C4.2 7.3 7.4 7.3 8.6 6.2" stroke="#e8e8d8" stroke-width="1" fill="none"/><path d="M4.8 8.6H6.8L7.6 10.6H4Z" fill="#2626ee"/><rect x="2.6" y="10" width="6.4" height="1" fill="#2626ee"/><rect x=".6" y="10.6" width="10.6" height=".7" fill="#a0a090"/></svg>
<span class="t r " style="right:35.8px;top:493.55px;">458.40</span>
<span class="t " style="left:31.8px;top:515.55px;">75515</span>
<svg class="a" style="left:69.6px;top:516.95px" width="12" height="12" viewBox="0 0 12 12"><circle cx="5.1" cy="5.3" r="4.9" fill="#1a2f9a"/><path d="M.6 4C1.4 1.6 3.6.3 5.8.5 5.2 2 4.2 2.8 3.4 4.2 2.8 5.4 3.2 6.6 2 7.2 1 6.4.4 5.2.6 4Z" fill="#35b431"/><path d="M3.2 2.4C3.8 1.4 5 1 6.2 1.2 5.6 2.2 4.6 2.8 3.6 3.6Z" fill="#c8f0ff"/><path d="M1.6 8.4C3 8.2 4.2 9 4.8 10 3.6 10 2.4 9.4 1.6 8.4Z" fill="#2a8a3a"/><path d="M4.7 2.4C4.7 1.8 5.1 1.5 5.7 1.5H8.9C9.5 1.5 9.9 1.9 9.9 2.5V5.8H10.3C10.9 5.8 11 6.4 10.6 6.9L7.8 10.7C7.4 11.1 6.9 11.1 6.5 10.7L3.3 6.9C2.9 6.4 3.1 5.8 3.7 5.8H4.7Z" fill="#f47e20"/><path d="M5.7 2.6H8.9V6.7H9.5L7.2 9.7 4.7 6.7H5.7Z" fill="#ff9a40"/></svg>
<svg class="a" style="left:95.7px;top:514.75px" width="13.6" height="13.6" viewBox="-.1 -.1 14.2 14.2"><circle cx="7" cy="7" r="6.7" fill="#20aee8"/><circle cx="8.6" cy="4.6" r="1.7" fill="none" stroke="#56c24a" stroke-width="1.3"/><circle cx="4.9" cy="8.3" r="2" fill="none" stroke="#c07c50" stroke-width="1.4"/><circle cx="9.7" cy="8.9" r="1.4" fill="none" stroke="#c07c50" stroke-width="1.1"/></svg>
<svg class="a" style="left:124px;top:516.95px" width="16.2" height="10.8" viewBox="0 0 16 11"><rect width="16" height="11" fill="#000"/><rect y="3.7" width="16" height="3.6" fill="#d80000"/><rect y="7.3" width="16" height="3.7" fill="#ffd200"/><rect x=".5" y=".5" width="15" height="10" fill="none" stroke="#000" stroke-opacity=".55"/></svg>
<svg class="a" style="left:151px;top:517.15px" width="15" height="10.4" viewBox="0 0 16 11"><rect width="16" height="11" fill="#fff"/><rect width="5.4" height="11" fill="#0000f0"/><rect x="10.6" width="5.4" height="11" fill="#f00000"/><rect x=".5" y=".5" width="15" height="10" fill="none" stroke="#222" stroke-opacity=".75"/></svg>
<svg class="a" style="left:169px;top:517.15px" width="15" height="10.4" viewBox="0 0 16 11"><rect width="16" height="11" fill="#fff"/><rect width="5.4" height="11" fill="#009246"/><rect x="10.6" width="5.4" height="11" fill="#f00000"/><rect x=".5" y=".5" width="15" height="10" fill="none" stroke="#222" stroke-opacity=".75"/></svg>
<svg class="a" style="left:186.6px;top:517.15px" width="15.4" height="10.4" viewBox="0 0 16 11"><rect width="16" height="11" fill="#1414c8"/><path d="M0 0L16 11M16 0L0 11" stroke="#d8d0f4" stroke-width="1.7"/><path d="M0 0L16 11M16 0L0 11" stroke="#f0506a" stroke-width=".9"/><path d="M8 0V11M0 5.5H16" stroke="#ecd8ec" stroke-width="2.5"/><path d="M8 0V11M0 5.5H16" stroke="#f02838" stroke-width="1.3"/></svg>
<span class="t " style="left:227.3px;top:515.55px;">Slf202512191329_snowweather</span>
<span class="t " style="left:556.8px;top:515.55px;">*</span>
<span class="t " style="left:647.3px;top:515.55px;">19.12.25 16:45</span>
<span class="t " style="left:722.3px;top:515.55px;">19.12.25 14:30</span>
<span class="t r " style="right:193.8px;top:515.55px;">1</span>
<span class="t r " style="right:159.8px;top:515.55px;">313</span>
<span class="t r " style="right:101.8px;top:515.55px;">1 745</span>
<svg class="a" style="left:934.2px;top:515.95px" width="12" height="12" viewBox="0 0 12 12"><rect x="1.4" y=".5" width="8.8" height="8.4" rx="2.6" fill="#2626ee"/><ellipse cx="5.8" cy="1.9" rx="2.6" ry=".8" fill="#7a7af8"/><path d="M3 3.6C4.2 4.6 7.4 4.6 8.6 3.6M3 6.2C4.2 7.3 7.4 7.3 8.6 6.2" stroke="#e8e8d8" stroke-width="1" fill="none"/><path d="M4.8 8.6H6.8L7.6 10.6H4Z" fill="#2626ee"/><rect x="2.6" y="10" width="6.4" height="1" fill="#2626ee"/><rect x=".6" y="10.6" width="10.6" height=".7" fill="#a0a090"/></svg>
<span class="t r " style="right:35.8px;top:515.55px;">408.30</span>
<div class="a" style="left:26px;top:534px;width:987px;height:22px;background:#f2f2f2;"></div>
<span class="t " style="left:31.8px;top:537.55px;">75499</span>
<svg class="a" style="left:69.6px;top:538.95px" width="12" height="12" viewBox="0 0 12 12"><circle cx="5.1" cy="5.3" r="4.9" fill="#1a2f9a"/><path d="M.6 4C1.4 1.6 3.6.3 5.8.5 5.2 2 4.2 2.8 3.4 4.2 2.8 5.4 3.2 6.6 2 7.2 1 6.4.4 5.2.6 4Z" fill="#35b431"/><path d="M3.2 2.4C3.8 1.4 5 1 6.2 1.2 5.6 2.2 4.6 2.8 3.6 3.6Z" fill="#c8f0ff"/><path d="M1.6 8.4C3 8.2 4.2 9 4.8 10 3.6 10 2.4 9.4 1.6 8.4Z" fill="#2a8a3a"/><path d="M4.7 2.4C4.7 1.8 5.1 1.5 5.7 1.5H8.9C9.5 1.5 9.9 1.9 9.9 2.5V5.8H10.3C10.9 5.8 11 6.4 10.6 6.9L7.8 10.7C7.4 11.1 6.9 11.1 6.5 10.7L3.3 6.9C2.9 6.4 3.1 5.8 3.7 5.8H4.7Z" fill="#f47e20"/><path d="M5.7 2.6H8.9V6.7H9.5L7.2 9.7 4.7 6.7H5.7Z" fill="#ff9a40"/></svg>
<svg class="a" style="left:95.7px;top:536.75px" width="13.6" height="13.6" viewBox="-.1 -.1 14.2 14.2"><circle cx="7" cy="7" r="6.7" fill="#20aee8"/><circle cx="8.6" cy="4.6" r="1.7" fill="none" stroke="#56c24a" stroke-width="1.3"/><circle cx="4.9" cy="8.3" r="2" fill="none" stroke="#c07c50" stroke-width="1.4"/><circle cx="9.7" cy="8.9" r="1.4" fill="none" stroke="#c07c50" stroke-width="1.1"/></svg>
<svg class="a" style="left:124px;top:538.95px" width="16.2" height="10.8" viewBox="0 0 16 11"><rect width="16" height="11" fill="#000"/><rect y="3.7" width="16" height="3.6" fill="#d80000"/><rect y="7.3" width="16" height="3.7" fill="#ffd200"/><rect x=".5" y=".5" width="15" height="10" fill="none" stroke="#000" stroke-opacity=".55"/></svg>
<svg class="a" style="left:151px;top:539.15px" width="15" height="10.4" viewBox="0 0 16 11"><rect width="16" height="11" fill="#fff"/><rect width="5.4" height="11" fill="#0000f0"/><rect x="10.6" width="5.4" height="11" fill="#f00000"/><rect x=".5" y=".5" width="15" height="10" fill="none" stroke="#222" stroke-opacity=".75"/></svg>
<svg class="a" style="left:169px;top:539.15px" width="15" height="10.4" viewBox="0 0 16 11"><rect width="16" height="11" fill="#fff"/><rect width="5.4" height="11" fill="#009246"/><rect x="10.6" width="5.4" height="11" fill="#f00000"/><rect x=".5" y=".5" width="15" height="10" fill="none" stroke="#222" stroke-opacity=".75"/></svg>
<svg class="a" style="left:186.6px;top:539.15px" width="15.4" height="10.4" viewBox="0 0 16 11"><rect width="16" height="11" fill="#1414c8"/><path d="M0 0L16 11M16 0L0 11" stroke="#d8d0f4" stroke-width="1.7"/><path d="M0 0L16 11M16 0L0 11" stroke="#f0506a" stroke-width=".9"/><path d="M8 0V11M0 5.5H16" stroke="#ecd8ec" stroke-width="2.5"/><path d="M8 0V11M0 5.5H16" stroke="#f02838" stroke-width="1.3"/></svg>
<span class="t " style="left:227.3px;top:537.55px;">Slf202512181345_snowweather</span>
<span class="t " style="left:556.8px;top:537.55px;">*</span>
<span class="t " style="left:647.3px;top:537.55px;">18.12.25 16:45</span>
<span class="t " style="left:722.3px;top:537.55px;">18.12.25 14:47</span>
<span class="t r " style="right:193.8px;top:537.55px;">1</span>
<span class="t r " style="right:159.8px;top:537.55px;">384</span>
<span class="t r " style="right:101.8px;top:537.55px;">2 120</span>
<svg class="a" style="left:934.2px;top:537.95px" width="12" height="12" viewBox="0 0 12 12"><rect x="1.4" y=".5" width="8.8" height="8.4" rx="2.6" fill="#2626ee"/><ellipse cx="5.8" cy="1.9" rx="2.6" ry=".8" fill="#7a7af8"/><path d="M3 3.6C4.2 4.6 7.4 4.6 8.6 3.6M3 6.2C4.2 7.3 7.4 7.3 8.6 6.2" stroke="#e8e8d8" stroke-width="1" fill="none"/><path d="M4.8 8.6H6.8L7.6 10.6H4Z" fill="#2626ee"/><rect x="2.6" y="10" width="6.4" height="1" fill="#2626ee"/><rect x=".6" y="10.6" width="10.6" height=".7" fill="#a0a090"/></svg>
<span class="t r " style="right:35.8px;top:537.55px;">496.05</span>
<span class="t " style="left:31.8px;top:559.55px;">75497</span>
<svg class="a" style="left:69.6px;top:560.95px" width="12" height="12" viewBox="0 0 12 12"><circle cx="5.1" cy="5.3" r="4.9" fill="#1a2f9a"/><path d="M.6 4C1.4 1.6 3.6.3 5.8.5 5.2 2 4.2 2.8 3.4 4.2 2.8 5.4 3.2 6.6 2 7.2 1 6.4.4 5.2.6 4Z" fill="#35b431"/><path d="M3.2 2.4C3.8 1.4 5 1 6.2 1.2 5.6 2.2 4.6 2.8 3.6 3.6Z" fill="#c8f0ff"/><path d="M1.6 8.4C3 8.2 4.2 9 4.8 10 3.6 10 2.4 9.4 1.6 8.4Z" fill="#2a8a3a"/><path d="M4.7 2.4C4.7 1.8 5.1 1.5 5.7 1.5H8.9C9.5 1.5 9.9 1.9 9.9 2.5V5.8H10.3C10.9 5.8 11 6.4 10.6 6.9L7.8 10.7C7.4 11.1 6.9 11.1 6.5 10.7L3.3 6.9C2.9 6.4 3.1 5.8 3.7 5.8H4.7Z" fill="#f47e20"/><path d="M5.7 2.6H8.9V6.7H9.5L7.2 9.7 4.7 6.7H5.7Z" fill="#ff9a40"/></svg>
<svg class="a" style="left:95.7px;top:558.75px" width="13.6" height="13.6" viewBox="-.1 -.1 14.2 14.2"><circle cx="7" cy="7" r="6.7" fill="#20aee8"/><circle cx="8.6" cy="4.6" r="1.7" fill="none" stroke="#56c24a" stroke-width="1.3"/><circle cx="4.9" cy="8.3" r="2" fill="none" stroke="#c07c50" stroke-width="1.4"/><circle cx="9.7" cy="8.9" r="1.4" fill="none" stroke="#c07c50" stroke-width="1.1"/></svg>
<svg class="a" style="left:124px;top:560.95px" width="16.2" height="10.8" viewBox="0 0 16 11"><rect width="16" height="11" fill="#000"/><rect y="3.7" width="16" height="3.6" fill="#d80000"/><rect y="7.3" width="16" height="3.7" fill="#ffd200"/><rect x=".5" y=".5" width="15" height="10" fill="none" stroke="#000" stroke-opacity=".55"/></svg>
<svg class="a" style="left:151px;top:561.15px" width="15" height="10.4" viewBox="0 0 16 11"><rect width="16" height="11" fill="#fff"/><rect width="5.4" height="11" fill="#0000f0"/><rect x="10.6" width="5.4" height="11" fill="#f00000"/><rect x=".5" y=".5" width="15" height="10" fill="none" stroke="#222" stroke-opacity=".75"/></svg>
<svg class="a" style="left:169px;top:561.15px" width="15" height="10.4" viewBox="0 0 16 11"><rect width="16" height="11" fill="#fff"/><rect width="5.4" height="11" fill="#009246"/><rect x="10.6" width="5.4" height="11" fill="#f00000"/><rect x=".5" y=".5" width="15" height="10" fill="none" stroke="#222" stroke-opacity=".75"/></svg>
<svg class="a" style="left:186.6px;top:561.15px" width="15.4" height="10.4" viewBox="0 0 16 11"><rect width="16" height="11" fill="#1414c8"/><path d="M0 0L16 11M16 0L0 11" stroke="#d8d0f4" stroke-width="1.7"/><path d="M0 0L16 11M16 0L0 11" stroke="#f0506a" stroke-width=".9"/><path d="M8 0V11M0 5.5H16" stroke="#ecd8ec" stroke-width="2.5"/><path d="M8 0V11M0 5.5H16" stroke="#f02838" stroke-width="1.3"/></svg>
<span class="t " style="left:227.3px;top:559.55px;">Slf202512171317_snowweather</span>
<span class="t " style="left:556.8px;top:559.55px;">*</span>
<span class="t " style="left:647.3px;top:559.55px;">17.12.25 16:45</span>
<span class="t " style="left:722.3px;top:559.55px;">17.12.25 14:18</span>
<span class="t r " style="right:193.8px;top:559.55px;">1</span>
<span class="t r " style="right:159.8px;top:559.55px;">361</span>
<span class="t r " style="right:101.8px;top:559.55px;">1 986</span>
<svg class="a" style="left:934.2px;top:559.95px" width="12" height="12" viewBox="0 0 12 12"><rect x="1.4" y=".5" width="8.8" height="8.4" rx="2.6" fill="#2626ee"/><ellipse cx="5.8" cy="1.9" rx="2.6" ry=".8" fill="#7a7af8"/><path d="M3 3.6C4.2 4.6 7.4 4.6 8.6 3.6M3 6.2C4.2 7.3 7.4 7.3 8.6 6.2" stroke="#e8e8d8" stroke-width="1" fill="none"/><path d="M4.8 8.6H6.8L7.6 10.6H4Z" fill="#2626ee"/><rect x="2.6" y="10" width="6.4" height="1" fill="#2626ee"/><rect x=".6" y="10.6" width="10.6" height=".7" fill="#a0a090"/></svg>
<span class="t r " style="right:35.8px;top:559.55px;">464.70</span>
<div class="a" style="left:26px;top:578px;width:987px;height:22px;background:#f2f2f2;"></div>
<span class="t " style="left:31.8px;top:581.55px;">75491</span>
<svg class="a" style="left:69.6px;top:582.95px" width="12" height="12" viewBox="0 0 12 12"><circle cx="5.1" cy="5.3" r="4.9" fill="#1a2f9a"/><path d="M.6 4C1.4 1.6 3.6.3 5.8.5 5.2 2 4.2 2.8 3.4 4.2 2.8 5.4 3.2 6.6 2 7.2 1 6.4.4 5.2.6 4Z" fill="#35b431"/><path d="M3.2 2.4C3.8 1.4 5 1 6.2 1.2 5.6 2.2 4.6 2.8 3.6 3.6Z" fill="#c8f0ff"/><path d="M1.6 8.4C3 8.2 4.2 9 4.8 10 3.6 10 2.4 9.4 1.6 8.4Z" fill="#2a8a3a"/><path d="M4.7 2.4C4.7 1.8 5.1 1.5 5.7 1.5H8.9C9.5 1.5 9.9 1.9 9.9 2.5V5.8H10.3C10.9 5.8 11 6.4 10.6 6.9L7.8 10.7C7.4 11.1 6.9 11.1 6.5 10.7L3.3 6.9C2.9 6.4 3.1 5.8 3.7 5.8H4.7Z" fill="#f47e20"/><path d="M5.7 2.6H8.9V6.7H9.5L7.2 9.7 4.7 6.7H5.7Z" fill="#ff9a40"/></svg>
<svg class="a" style="left:95.7px;top:580.75px" width="13.6" height="13.6" viewBox="-.1 -.1 14.2 14.2"><circle cx="7" cy="7" r="6.7" fill="#20aee8"/><circle cx="8.6" cy="4.6" r="1.7" fill="none" stroke="#56c24a" stroke-width="1.3"/><circle cx="4.9" cy="8.3" r="2" fill="none" stroke="#c07c50" stroke-width="1.4"/><circle cx="9.7" cy="8.9" r="1.4" fill="none" stroke="#c07c50" stroke-width="1.1"/></svg>
<svg class="a" style="left:124px;top:582.95px" width="16.2" height="10.8" viewBox="0 0 16 11"><rect width="16" height="11" fill="#000"/><rect y="3.7" width="16" height="3.6" fill="#d80000"/><rect y="7.3" width="16" height="3.7" fill="#ffd200"/><rect x=".5" y=".5" width="15" height="10" fill="none" stroke="#000" stroke-opacity=".55"/></svg>
<svg class="a" style="left:151px;top:583.15px" width="15" height="10.4" viewBox="0 0 16 11"><rect width="16" height="11" fill="#fff"/><rect width="5.4" height="11" fill="#0000f0"/><rect x="10.6" width="5.4" height="11" fill="#f00000"/><rect x=".5" y=".5" width="15" height="10" fill="none" stroke="#222" stroke-opacity=".75"/></svg>
<svg class="a" style="left:169px;top:583.15px" width="15" height="10.4" viewBox="0 0 16 11"><rect width="16" height="11" fill="#fff"/><rect width="5.4" height="11" fill="#009246"/><rect x="10.6" width="5.4" height="11" fill="#f00000"/><rect x=".5" y=".5" width="15" height="10" fill="none" stroke="#222" stroke-opacity=".75"/></svg>
<svg class="a" style="left:186.6px;top:583.15px" width="15.4" height="10.4" viewBox="0 0 16 11"><rect width="16" height="11" fill="#1414c8"/><path d="M0 0L16 11M16 0L0 11" stroke="#d8d0f4" stroke-width="1.7"/><path d="M0 0L16 11M16 0L0 11" stroke="#f0506a" stroke-width=".9"/><path d="M8 0V11M0 5.5H16" stroke="#ecd8ec" stroke-width="2.5"/><path d="M8 0V11M0 5.5H16" stroke="#f02838" stroke-width="1.3"/></svg>
<span class="t " style="left:227.3px;top:581.55px;">Slf202512161346_snowweather</span>
<span class="t " style="left:556.8px;top:581.55px;">*</span>
<span class="t " style="left:647.3px;top:581.55px;">16.12.25 16:45</span>
<span class="t " style="left:722.3px;top:581.55px;">16.12.25 14:48</span>
<span class="t r " style="right:193.8px;top:581.55px;">1</span>
<span class="t r " style="right:159.8px;top:581.55px;">405</span>
<span class="t r " style="right:101.8px;top:581.55px;">2 356</span>
<svg class="a" style="left:934.2px;top:581.95px" width="12" height="12" viewBox="0 0 12 12"><rect x="1.4" y=".5" width="8.8" height="8.4" rx="2.6" fill="#2626ee"/><ellipse cx="5.8" cy="1.9" rx="2.6" ry=".8" fill="#7a7af8"/><path d="M3 3.6C4.2 4.6 7.4 4.6 8.6 3.6M3 6.2C4.2 7.3 7.4 7.3 8.6 6.2" stroke="#e8e8d8" stroke-width="1" fill="none"/><path d="M4.8 8.6H6.8L7.6 10.6H4Z" fill="#2626ee"/><rect x="2.6" y="10" width="6.4" height="1" fill="#2626ee"/><rect x=".6" y="10.6" width="10.6" height=".7" fill="#a0a090"/></svg>
<span class="t r " style="right:35.8px;top:581.55px;">551.25</span>
<span class="t " style="left:31.8px;top:603.55px;">75489</span>
<svg class="a" style="left:69.6px;top:604.95px" width="12" height="12" viewBox="0 0 12 12"><circle cx="5.1" cy="5.3" r="4.9" fill="#1a2f9a"/><path d="M.6 4C1.4 1.6 3.6.3 5.8.5 5.2 2 4.2 2.8 3.4 4.2 2.8 5.4 3.2 6.6 2 7.2 1 6.4.4 5.2.6 4Z" fill="#35b431"/><path d="M3.2 2.4C3.8 1.4 5 1 6.2 1.2 5.6 2.2 4.6 2.8 3.6 3.6Z" fill="#c8f0ff"/><path d="M1.6 8.4C3 8.2 4.2 9 4.8 10 3.6 10 2.4 9.4 1.6 8.4Z" fill="#2a8a3a"/><path d="M4.7 2.4C4.7 1.8 5.1 1.5 5.7 1.5H8.9C9.5 1.5 9.9 1.9 9.9 2.5V5.8H10.3C10.9 5.8 11 6.4 10.6 6.9L7.8 10.7C7.4 11.1 6.9 11.1 6.5 10.7L3.3 6.9C2.9 6.4 3.1 5.8 3.7 5.8H4.7Z" fill="#f47e20"/><path d="M5.7 2.6H8.9V6.7H9.5L7.2 9.7 4.7 6.7H5.7Z" fill="#ff9a40"/></svg>
<svg class="a" style="left:95.7px;top:602.75px" width="13.6" height="13.6" viewBox="-.1 -.1 14.2 14.2"><circle cx="7" cy="7" r="6.7" fill="#20aee8"/><circle cx="8.6" cy="4.6" r="1.7" fill="none" stroke="#56c24a" stroke-width="1.3"/><circle cx="4.9" cy="8.3" r="2" fill="none" stroke="#c07c50" stroke-width="1.4"/><circle cx="9.7" cy="8.9" r="1.4" fill="none" stroke="#c07c50" stroke-width="1.1"/></svg>
<svg class="a" style="left:124px;top:604.95px" width="16.2" height="10.8" viewBox="0 0 16 11"><rect width="16" height="11" fill="#000"/><rect y="3.7" width="16" height="3.6" fill="#d80000"/><rect y="7.3" width="16" height="3.7" fill="#ffd200"/><rect x=".5" y=".5" width="15" height="10" fill="none" stroke="#000" stroke-opacity=".55"/></svg>
<svg class="a" style="left:151px;top:605.15px" width="15" height="10.4" viewBox="0 0 16 11"><rect width="16" height="11" fill="#fff"/><rect width="5.4" height="11" fill="#0000f0"/><rect x="10.6" width="5.4" height="11" fill="#f00000"/><rect x=".5" y=".5" width="15" height="10" fill="none" stroke="#222" stroke-opacity=".75"/></svg>
<svg class="a" style="left:169px;top:605.15px" width="15" height="10.4" viewBox="0 0 16 11"><rect width="16" height="11" fill="#fff"/><rect width="5.4" height="11" fill="#009246"/><rect x="10.6" width="5.4" height="11" fill="#f00000"/><rect x=".5" y=".5" width="15" height="10" fill="none" stroke="#222" stroke-opacity=".75"/></svg>
<svg class="a" style="left:186.6px;top:605.15px" width="15.4" height="10.4" viewBox="0 0 16 11"><rect width="16" height="11" fill="#1414c8"/><path d="M0 0L16 11M16 0L0 11" stroke="#d8d0f4" stroke-width="1.7"/><path d="M0 0L16 11M16 0L0 11" stroke="#f0506a" stroke-width=".9"/><path d="M8 0V11M0 5.5H16" stroke="#ecd8ec" stroke-width="2.5"/><path d="M8 0V11M0 5.5H16" stroke="#f02838" stroke-width="1.3"/></svg>
<span class="t " style="left:227.3px;top:603.55px;">Slf202512151332_snowweather</span>
<span class="t " style="left:556.8px;top:603.55px;">*</span>
<span class="t " style="left:647.3px;top:603.55px;">15.12.25 16:45</span>
<span class="t " style="left:722.3px;top:603.55px;">15.12.25 14:34</span>
<span class="t r " style="right:193.8px;top:603.55px;">1</span>
<span class="t r " style="right:159.8px;top:603.55px;">369</span>
<span class="t r " style="right:101.8px;top:603.55px;">2 095</span>
<svg class="a" style="left:934.2px;top:603.95px" width="12" height="12" viewBox="0 0 12 12"><rect x="1.4" y=".5" width="8.8" height="8.4" rx="2.6" fill="#2626ee"/><ellipse cx="5.8" cy="1.9" rx="2.6" ry=".8" fill="#7a7af8"/><path d="M3 3.6C4.2 4.6 7.4 4.6 8.6 3.6M3 6.2C4.2 7.3 7.4 7.3 8.6 6.2" stroke="#e8e8d8" stroke-width="1" fill="none"/><path d="M4.8 8.6H6.8L7.6 10.6H4Z" fill="#2626ee"/><rect x="2.6" y="10" width="6.4" height="1" fill="#2626ee"/><rect x=".6" y="10.6" width="10.6" height=".7" fill="#a0a090"/></svg>
<span class="t r " style="right:35.8px;top:603.55px;">490.20</span>
<div class="a" style="left:26px;top:622px;width:987px;height:21px;background:#f2f2f2;"></div>
<span class="t " style="left:31.8px;top:625.55px;">75484</span>
<svg class="a" style="left:69.6px;top:626.95px" width="12" height="12" viewBox="0 0 12 12"><circle cx="5.1" cy="5.3" r="4.9" fill="#1a2f9a"/><path d="M.6 4C1.4 1.6 3.6.3 5.8.5 5.2 2 4.2 2.8 3.4 4.2 2.8 5.4 3.2 6.6 2 7.2 1 6.4.4 5.2.6 4Z" fill="#35b431"/><path d="M3.2 2.4C3.8 1.4 5 1 6.2 1.2 5.6 2.2 4.6 2.8 3.6 3.6Z" fill="#c8f0ff"/><path d="M1.6 8.4C3 8.2 4.2 9 4.8 10 3.6 10 2.4 9.4 1.6 8.4Z" fill="#2a8a3a"/><path d="M4.7 2.4C4.7 1.8 5.1 1.5 5.7 1.5H8.9C9.5 1.5 9.9 1.9 9.9 2.5V5.8H10.3C10.9 5.8 11 6.4 10.6 6.9L7.8 10.7C7.4 11.1 6.9 11.1 6.5 10.7L3.3 6.9C2.9 6.4 3.1 5.8 3.7 5.8H4.7Z" fill="#f47e20"/><path d="M5.7 2.6H8.9V6.7H9.5L7.2 9.7 4.7 6.7H5.7Z" fill="#ff9a40"/></svg>
<svg class="a" style="left:95.7px;top:624.75px" width="13.6" height="13.6" viewBox="-.1 -.1 14.2 14.2"><circle cx="7" cy="7" r="6.7" fill="#20aee8"/><circle cx="8.6" cy="4.6" r="1.7" fill="none" stroke="#56c24a" stroke-width="1.3"/><circle cx="4.9" cy="8.3" r="2" fill="none" stroke="#c07c50" stroke-width="1.4"/><circle cx="9.7" cy="8.9" r="1.4" fill="none" stroke="#c07c50" stroke-width="1.1"/></svg>
<svg class="a" style="left:124px;top:626.95px" width="16.2" height="10.8" viewBox="0 0 16 11"><rect width="16" height="11" fill="#000"/><rect y="3.7" width="16" height="3.6" fill="#d80000"/><rect y="7.3" width="16" height="3.7" fill="#ffd200"/><rect x=".5" y=".5" width="15" height="10" fill="none" stroke="#000" stroke-opacity=".55"/></svg>
<svg class="a" style="left:151px;top:627.15px" width="15" height="10.4" viewBox="0 0 16 11"><rect width="16" height="11" fill="#fff"/><rect width="5.4" height="11" fill="#0000f0"/><rect x="10.6" width="5.4" height="11" fill="#f00000"/><rect x=".5" y=".5" width="15" height="10" fill="none" stroke="#222" stroke-opacity=".75"/></svg>
<svg class="a" style="left:169px;top:627.15px" width="15" height="10.4" viewBox="0 0 16 11"><rect width="16" height="11" fill="#fff"/><rect width="5.4" height="11" fill="#009246"/><rect x="10.6" width="5.4" height="11" fill="#f00000"/><rect x=".5" y=".5" width="15" height="10" fill="none" stroke="#222" stroke-opacity=".75"/></svg>
<svg class="a" style="left:186.6px;top:627.15px" width="15.4" height="10.4" viewBox="0 0 16 11"><rect width="16" height="11" fill="#1414c8"/><path d="M0 0L16 11M16 0L0 11" stroke="#d8d0f4" stroke-width="1.7"/><path d="M0 0L16 11M16 0L0 11" stroke="#f0506a" stroke-width=".9"/><path d="M8 0V11M0 5.5H16" stroke="#ecd8ec" stroke-width="2.5"/><path d="M8 0V11M0 5.5H16" stroke="#f02838" stroke-width="1.3"/></svg>
<span class="t " style="left:227.3px;top:625.55px;">Slf202512141317_snowweather</span>
<span class="t " style="left:556.8px;top:625.55px;">*</span>
<span class="t " style="left:647.3px;top:625.55px;">14.12.25 16:45</span>
<span class="t " style="left:722.3px;top:625.55px;">14.12.25 14:18</span>
<span class="t r " style="right:193.8px;top:625.55px;">1</span>
<span class="t r " style="right:159.8px;top:625.55px;">382</span>
<span class="t r " style="right:101.8px;top:625.55px;">2 103</span>
<svg class="a" style="left:934.2px;top:625.95px" width="12" height="12" viewBox="0 0 12 12"><rect x="1.4" y=".5" width="8.8" height="8.4" rx="2.6" fill="#2626ee"/><ellipse cx="5.8" cy="1.9" rx="2.6" ry=".8" fill="#7a7af8"/><path d="M3 3.6C4.2 4.6 7.4 4.6 8.6 3.6M3 6.2C4.2 7.3 7.4 7.3 8.6 6.2" stroke="#e8e8d8" stroke-width="1" fill="none"/><path d="M4.8 8.6H6.8L7.6 10.6H4Z" fill="#2626ee"/><rect x="2.6" y="10" width="6.4" height="1" fill="#2626ee"/><rect x=".6" y="10.6" width="10.6" height=".7" fill="#a0a090"/></svg>
<span class="t r " style="right:35.8px;top:625.55px;">492.15</span>
<span class="t " style="left:31.8px;top:646.55px;">75483</span>
<svg class="a" style="left:69.6px;top:647.95px" width="12" height="12" viewBox="0 0 12 12"><circle cx="5.1" cy="5.3" r="4.9" fill="#1a2f9a"/><path d="M.6 4C1.4 1.6 3.6.3 5.8.5 5.2 2 4.2 2.8 3.4 4.2 2.8 5.4 3.2 6.6 2 7.2 1 6.4.4 5.2.6 4Z" fill="#35b431"/><path d="M3.2 2.4C3.8 1.4 5 1 6.2 1.2 5.6 2.2 4.6 2.8 3.6 3.6Z" fill="#c8f0ff"/><path d="M1.6 8.4C3 8.2 4.2 9 4.8 10 3.6 10 2.4 9.4 1.6 8.4Z" fill="#2a8a3a"/><path d="M4.7 2.4C4.7 1.8 5.1 1.5 5.7 1.5H8.9C9.5 1.5 9.9 1.9 9.9 2.5V5.8H10.3C10.9 5.8 11 6.4 10.6 6.9L7.8 10.7C7.4 11.1 6.9 11.1 6.5 10.7L3.3 6.9C2.9 6.4 3.1 5.8 3.7 5.8H4.7Z" fill="#f47e20"/><path d="M5.7 2.6H8.9V6.7H9.5L7.2 9.7 4.7 6.7H5.7Z" fill="#ff9a40"/></svg>
<svg class="a" style="left:95.7px;top:645.75px" width="13.6" height="13.6" viewBox="-.1 -.1 14.2 14.2"><circle cx="7" cy="7" r="6.7" fill="#20aee8"/><circle cx="8.6" cy="4.6" r="1.7" fill="none" stroke="#56c24a" stroke-width="1.3"/><circle cx="4.9" cy="8.3" r="2" fill="none" stroke="#c07c50" stroke-width="1.4"/><circle cx="9.7" cy="8.9" r="1.4" fill="none" stroke="#c07c50" stroke-width="1.1"/></svg>
<svg class="a" style="left:124px;top:647.95px" width="16.2" height="10.8" viewBox="0 0 16 11"><rect width="16" height="11" fill="#000"/><rect y="3.7" width="16" height="3.6" fill="#d80000"/><rect y="7.3" width="16" height="3.7" fill="#ffd200"/><rect x=".5" y=".5" width="15" height="10" fill="none" stroke="#000" stroke-opacity=".55"/></svg>
<svg class="a" style="left:151px;top:648.15px" width="15" height="10.4" viewBox="0 0 16 11"><rect width="16" height="11" fill="#fff"/><rect width="5.4" height="11" fill="#0000f0"/><rect x="10.6" width="5.4" height="11" fill="#f00000"/><rect x=".5" y=".5" width="15" height="10" fill="none" stroke="#222" stroke-opacity=".75"/></svg>
<svg class="a" style="left:169px;top:648.15px" width="15" height="10.4" viewBox="0 0 16 11"><rect width="16" height="11" fill="#fff"/><rect width="5.4" height="11" fill="#009246"/><rect x="10.6" width="5.4" height="11" fill="#f00000"/><rect x=".5" y=".5" width="15" height="10" fill="none" stroke="#222" stroke-opacity=".75"/></svg>
<svg class="a" style="left:186.6px;top:648.15px" width="15.4" height="10.4" viewBox="0 0 16 11"><rect width="16" height="11" fill="#1414c8"/><path d="M0 0L16 11M16 0L0 11" stroke="#d8d0f4" stroke-width="1.7"/><path d="M0 0L16 11M16 0L0 11" stroke="#f0506a" stroke-width=".9"/><path d="M8 0V11M0 5.5H16" stroke="#ecd8ec" stroke-width="2.5"/><path d="M8 0V11M0 5.5H16" stroke="#f02838" stroke-width="1.3"/></svg>
<span class="t " style="left:227.3px;top:646.55px;">Slf202512131326_snowweather</span>
<span class="t " style="left:556.8px;top:646.55px;">*</span>
<span class="t " style="left:647.3px;top:646.55px;">13.12.25 16:45</span>
<span class="t " style="left:722.3px;top:646.55px;">13.12.25 14:27</span>
<span class="t r " style="right:193.8px;top:646.55px;">1</span>
<span class="t r " style="right:159.8px;top:646.55px;">323</span>
<span class="t r " style="right:101.8px;top:646.55px;">1 861</span>
<svg class="a" style="left:934.2px;top:646.95px" width="12" height="12" viewBox="0 0 12 12"><rect x="1.4" y=".5" width="8.8" height="8.4" rx="2.6" fill="#2626ee"/><ellipse cx="5.8" cy="1.9" rx="2.6" ry=".8" fill="#7a7af8"/><path d="M3 3.6C4.2 4.6 7.4 4.6 8.6 3.6M3 6.2C4.2 7.3 7.4 7.3 8.6 6.2" stroke="#e8e8d8" stroke-width="1" fill="none"/><path d="M4.8 8.6H6.8L7.6 10.6H4Z" fill="#2626ee"/><rect x="2.6" y="10" width="6.4" height="1" fill="#2626ee"/><rect x=".6" y="10.6" width="10.6" height=".7" fill="#a0a090"/></svg>
<span class="t r " style="right:35.8px;top:646.55px;">435.45</span>
<div class="a" style="left:26px;top:665px;width:987px;height:22px;background:#f2f2f2;"></div>
<span class="t " style="left:31.8px;top:668.55px;">75481</span>
<svg class="a" style="left:69.6px;top:669.95px" width="12" height="12" viewBox="0 0 12 12"><circle cx="5.1" cy="5.3" r="4.9" fill="#1a2f9a"/><path d="M.6 4C1.4 1.6 3.6.3 5.8.5 5.2 2 4.2 2.8 3.4 4.2 2.8 5.4 3.2 6.6 2 7.2 1 6.4.4 5.2.6 4Z" fill="#35b431"/><path d="M3.2 2.4C3.8 1.4 5 1 6.2 1.2 5.6 2.2 4.6 2.8 3.6 3.6Z" fill="#c8f0ff"/><path d="M1.6 8.4C3 8.2 4.2 9 4.8 10 3.6 10 2.4 9.4 1.6 8.4Z" fill="#2a8a3a"/><path d="M4.7 2.4C4.7 1.8 5.1 1.5 5.7 1.5H8.9C9.5 1.5 9.9 1.9 9.9 2.5V5.8H10.3C10.9 5.8 11 6.4 10.6 6.9L7.8 10.7C7.4 11.1 6.9 11.1 6.5 10.7L3.3 6.9C2.9 6.4 3.1 5.8 3.7 5.8H4.7Z" fill="#f47e20"/><path d="M5.7 2.6H8.9V6.7H9.5L7.2 9.7 4.7 6.7H5.7Z" fill="#ff9a40"/></svg>
<svg class="a" style="left:95.7px;top:667.75px" width="13.6" height="13.6" viewBox="-.1 -.1 14.2 14.2"><circle cx="7" cy="7" r="6.7" fill="#20aee8"/><circle cx="8.6" cy="4.6" r="1.7" fill="none" stroke="#56c24a" stroke-width="1.3"/><circle cx="4.9" cy="8.3" r="2" fill="none" stroke="#c07c50" stroke-width="1.4"/><circle cx="9.7" cy="8.9" r="1.4" fill="none" stroke="#c07c50" stroke-width="1.1"/></svg>
<svg class="a" style="left:124px;top:669.95px" width="16.2" height="10.8" viewBox="0 0 16 11"><rect width="16" height="11" fill="#000"/><rect y="3.7" width="16" height="3.6" fill="#d80000"/><rect y="7.3" width="16" height="3.7" fill="#ffd200"/><rect x=".5" y=".5" width="15" height="10" fill="none" stroke="#000" stroke-opacity=".55"/></svg>
<svg class="a" style="left:151px;top:670.15px" width="15" height="10.4" viewBox="0 0 16 11"><rect width="16" height="11" fill="#fff"/><rect width="5.4" height="11" fill="#0000f0"/><rect x="10.6" width="5.4" height="11" fill="#f00000"/><rect x=".5" y=".5" width="15" height="10" fill="none" stroke="#222" stroke-opacity=".75"/></svg>
<svg class="a" style="left:169px;top:670.15px" width="15" height="10.4" viewBox="0 0 16 11"><rect width="16" height="11" fill="#fff"/><rect width="5.4" height="11" fill="#009246"/><rect x="10.6" width="5.4" height="11" fill="#f00000"/><rect x=".5" y=".5" width="15" height="10" fill="none" stroke="#222" stroke-opacity=".75"/></svg>
<svg class="a" style="left:186.6px;top:670.15px" width="15.4" height="10.4" viewBox="0 0 16 11"><rect width="16" height="11" fill="#1414c8"/><path d="M0 0L16 11M16 0L0 11" stroke="#d8d0f4" stroke-width="1.7"/><path d="M0 0L16 11M16 0L0 11" stroke="#f0506a" stroke-width=".9"/><path d="M8 0V11M0 5.5H16" stroke="#ecd8ec" stroke-width="2.5"/><path d="M8 0V11M0 5.5H16" stroke="#f02838" stroke-width="1.3"/></svg>
<span class="t " style="left:227.3px;top:668.55px;">Slf202512121350_snowweather</span>
<span class="t " style="left:556.8px;top:668.55px;">*</span>
<span class="t " style="left:647.3px;top:668.55px;">12.12.25 16:45</span>
<span class="t " style="left:722.3px;top:668.55px;">12.12.25 14:51</span>
<span class="t r " style="right:193.8px;top:668.55px;">1</span>
<span class="t r " style="right:159.8px;top:668.55px;">300</span>
<span class="t r " style="right:101.8px;top:668.55px;">1 706</span>
<svg class="a" style="left:934.2px;top:668.95px" width="12" height="12" viewBox="0 0 12 12"><rect x="1.4" y=".5" width="8.8" height="8.4" rx="2.6" fill="#2626ee"/><ellipse cx="5.8" cy="1.9" rx="2.6" ry=".8" fill="#7a7af8"/><path d="M3 3.6C4.2 4.6 7.4 4.6 8.6 3.6M3 6.2C4.2 7.3 7.4 7.3 8.6 6.2" stroke="#e8e8d8" stroke-width="1" fill="none"/><path d="M4.8 8.6H6.8L7.6 10.6H4Z" fill="#2626ee"/><rect x="2.6" y="10" width="6.4" height="1" fill="#2626ee"/><rect x=".6" y="10.6" width="10.6" height=".7" fill="#a0a090"/></svg>
<span class="t r " style="right:35.8px;top:668.55px;">399.15</span>
<span class="t " style="left:31.8px;top:690.55px;">75477</span>
<svg class="a" style="left:69.6px;top:691.95px" width="12" height="12" viewBox="0 0 12 12"><circle cx="5.1" cy="5.3" r="4.9" fill="#1a2f9a"/><path d="M.6 4C1.4 1.6 3.6.3 5.8.5 5.2 2 4.2 2.8 3.4 4.2 2.8 5.4 3.2 6.6 2 7.2 1 6.4.4 5.2.6 4Z" fill="#35b431"/><path d="M3.2 2.4C3.8 1.4 5 1 6.2 1.2 5.6 2.2 4.6 2.8 3.6 3.6Z" fill="#c8f0ff"/><path d="M1.6 8.4C3 8.2 4.2 9 4.8 10 3.6 10 2.4 9.4 1.6 8.4Z" fill="#2a8a3a"/><path d="M4.7 2.4C4.7 1.8 5.1 1.5 5.7 1.5H8.9C9.5 1.5 9.9 1.9 9.9 2.5V5.8H10.3C10.9 5.8 11 6.4 10.6 6.9L7.8 10.7C7.4 11.1 6.9 11.1 6.5 10.7L3.3 6.9C2.9 6.4 3.1 5.8 3.7 5.8H4.7Z" fill="#f47e20"/><path d="M5.7 2.6H8.9V6.7H9.5L7.2 9.7 4.7 6.7H5.7Z" fill="#ff9a40"/></svg>
<svg class="a" style="left:95.7px;top:689.75px" width="13.6" height="13.6" viewBox="-.1 -.1 14.2 14.2"><circle cx="7" cy="7" r="6.7" fill="#20aee8"/><circle cx="8.6" cy="4.6" r="1.7" fill="none" stroke="#56c24a" stroke-width="1.3"/><circle cx="4.9" cy="8.3" r="2" fill="none" stroke="#c07c50" stroke-width="1.4"/><circle cx="9.7" cy="8.9" r="1.4" fill="none" stroke="#c07c50" stroke-width="1.1"/></svg>
<svg class="a" style="left:124px;top:691.95px" width="16.2" height="10.8" viewBox="0 0 16 11"><rect width="16" height="11" fill="#000"/><rect y="3.7" width="16" height="3.6" fill="#d80000"/><rect y="7.3" width="16" height="3.7" fill="#ffd200"/><rect x=".5" y=".5" width="15" height="10" fill="none" stroke="#000" stroke-opacity=".55"/></svg>
<svg class="a" style="left:151px;top:692.15px" width="15" height="10.4" viewBox="0 0 16 11"><rect width="16" height="11" fill="#fff"/><rect width="5.4" height="11" fill="#0000f0"/><rect x="10.6" width="5.4" height="11" fill="#f00000"/><rect x=".5" y=".5" width="15" height="10" fill="none" stroke="#222" stroke-opacity=".75"/></svg>
<svg class="a" style="left:169px;top:692.15px" width="15" height="10.4" viewBox="0 0 16 11"><rect width="16" height="11" fill="#fff"/><rect width="5.4" height="11" fill="#009246"/><rect x="10.6" width="5.4" height="11" fill="#f00000"/><rect x=".5" y=".5" width="15" height="10" fill="none" stroke="#222" stroke-opacity=".75"/></svg>
<svg class="a" style="left:186.6px;top:692.15px" width="15.4" height="10.4" viewBox="0 0 16 11"><rect width="16" height="11" fill="#1414c8"/><path d="M0 0L16 11M16 0L0 11" stroke="#d8d0f4" stroke-width="1.7"/><path d="M0 0L16 11M16 0L0 11" stroke="#f0506a" stroke-width=".9"/><path d="M8 0V11M0 5.5H16" stroke="#ecd8ec" stroke-width="2.5"/><path d="M8 0V11M0 5.5H16" stroke="#f02838" stroke-width="1.3"/></svg>
<span class="t " style="left:227.3px;top:690.55px;">Slf202512111501_snowweather</span>
<span class="t " style="left:556.8px;top:690.55px;">*</span>
<span class="t " style="left:647.3px;top:690.55px;">11.12.25 17:00</span>
<span class="t " style="left:722.3px;top:690.55px;">11.12.25 16:03</span>
<span class="t r " style="right:193.8px;top:690.55px;">1</span>
<span class="t r " style="right:159.8px;top:690.55px;">304</span>
<span class="t r " style="right:101.8px;top:690.55px;">1 729</span>
<svg class="a" style="left:934.2px;top:690.95px" width="12" height="12" viewBox="0 0 12 12"><rect x="1.4" y=".5" width="8.8" height="8.4" rx="2.6" fill="#2626ee"/><ellipse cx="5.8" cy="1.9" rx="2.6" ry=".8" fill="#7a7af8"/><path d="M3 3.6C4.2 4.6 7.4 4.6 8.6 3.6M3 6.2C4.2 7.3 7.4 7.3 8.6 6.2" stroke="#e8e8d8" stroke-width="1" fill="none"/><path d="M4.8 8.6H6.8L7.6 10.6H4Z" fill="#2626ee"/><rect x="2.6" y="10" width="6.4" height="1" fill="#2626ee"/><rect x=".6" y="10.6" width="10.6" height=".7" fill="#a0a090"/></svg>
<span class="t r " style="right:35.8px;top:690.55px;">404.55</span>
<div class="a" style="left:26px;top:709px;width:987px;height:22px;background:#f2f2f2;"></div>
<span class="t " style="left:31.8px;top:712.55px;">75475</span>
<svg class="a" style="left:69.6px;top:713.95px" width="12" height="12" viewBox="0 0 12 12"><circle cx="5.1" cy="5.3" r="4.9" fill="#1a2f9a"/><path d="M.6 4C1.4 1.6 3.6.3 5.8.5 5.2 2 4.2 2.8 3.4 4.2 2.8 5.4 3.2 6.6 2 7.2 1 6.4.4 5.2.6 4Z" fill="#35b431"/><path d="M3.2 2.4C3.8 1.4 5 1 6.2 1.2 5.6 2.2 4.6 2.8 3.6 3.6Z" fill="#c8f0ff"/><path d="M1.6 8.4C3 8.2 4.2 9 4.8 10 3.6 10 2.4 9.4 1.6 8.4Z" fill="#2a8a3a"/><path d="M4.7 2.4C4.7 1.8 5.1 1.5 5.7 1.5H8.9C9.5 1.5 9.9 1.9 9.9 2.5V5.8H10.3C10.9 5.8 11 6.4 10.6 6.9L7.8 10.7C7.4 11.1 6.9 11.1 6.5 10.7L3.3 6.9C2.9 6.4 3.1 5.8 3.7 5.8H4.7Z" fill="#f47e20"/><path d="M5.7 2.6H8.9V6.7H9.5L7.2 9.7 4.7 6.7H5.7Z" fill="#ff9a40"/></svg>
<svg class="a" style="left:95.7px;top:711.75px" width="13.6" height="13.6" viewBox="-.1 -.1 14.2 14.2"><circle cx="7" cy="7" r="6.7" fill="#f8b01c"/><path d="M2.8 4.4H7.4M5.1 3.4V4.4M3.4 5.6C4 7 5.4 8.2 7 8.6M6.8 5.6C6.2 7 4.8 8.4 3 9" stroke="#2a1c08" stroke-width="1.2" fill="none"/><path d="M6.6 11L8.8 6 11 11M7.4 9.6H10.2" stroke="#2a1c08" stroke-width="1.5" fill="none"/></svg>
<svg class="a" style="left:124px;top:713.95px" width="16.2" height="10.8" viewBox="0 0 16 11"><rect width="16" height="11" fill="#000"/><rect y="3.7" width="16" height="3.6" fill="#d80000"/><rect y="7.3" width="16" height="3.7" fill="#ffd200"/><rect x=".5" y=".5" width="15" height="10" fill="none" stroke="#000" stroke-opacity=".55"/></svg>
<svg class="a" style="left:151px;top:714.15px" width="15" height="10.4" viewBox="0 0 16 11"><rect width="16" height="11" fill="#fff"/><rect width="5.4" height="11" fill="#0000f0"/><rect x="10.6" width="5.4" height="11" fill="#f00000"/><rect x=".5" y=".5" width="15" height="10" fill="none" stroke="#222" stroke-opacity=".75"/></svg>
<svg class="a" style="left:168.8px;top:714.15px" width="15.4" height="10.4" viewBox="0 0 16 11"><rect width="16" height="11" fill="#1414c8"/><path d="M0 0L16 11M16 0L0 11" stroke="#d8d0f4" stroke-width="1.7"/><path d="M0 0L16 11M16 0L0 11" stroke="#f0506a" stroke-width=".9"/><path d="M8 0V11M0 5.5H16" stroke="#ecd8ec" stroke-width="2.5"/><path d="M8 0V11M0 5.5H16" stroke="#f02838" stroke-width="1.3"/></svg>
<span class="t " style="left:227.3px;top:712.55px;">TemperaturdiffusionimFels_ÜBERS</span>
<span class="t " style="left:556.8px;top:712.55px;">Bettzieche,Jochen</span>
<span class="t " style="left:647.3px;top:712.55px;">16.12.25 10:30</span>
<span class="t " style="left:722.3px;top:712.55px;">11.12.25 11:28</span>
<span class="t r " style="right:193.8px;top:712.55px;">1</span>
<span class="t r " style="right:159.8px;top:712.55px;">852</span>
<span class="t r " style="right:101.8px;top:712.55px;">5 291</span>
<svg class="a" style="left:934.1px;top:712.15px" width="13" height="13" viewBox="0 0 13 13"><circle cx="6.5" cy="6.2" r="6" fill="#1a1a1a"/><path d="M1.5 10.5L1 12.8 4 11.5Z" fill="#1a1a1a"/><path d="M3.6 3.6H6V6.2C6 7.6 5.2 8.6 3.8 9L3.5 8.2C4.3 7.9 4.7 7.3 4.7 6.4H3.6ZM7.2 3.6H9.6V6.2C9.6 7.6 8.8 8.6 7.4 9L7.1 8.2C7.9 7.9 8.3 7.3 8.3 6.4H7.2Z" fill="#fff"/></svg>
<span class="t r " style="right:35.8px;top:712.55px;">624.30</span>
<svg class="a" style="left:25.6px;top:136px" width="200" height="23" viewBox="0 0 200 23"><defs><linearGradient id="tg136" x1="0" y1="0" x2="0" y2="1"><stop offset="0" stop-color="#f8f8f8"/><stop offset="1" stop-color="#e4e4e4"/></linearGradient></defs><path d="M80.5 22.5L84 22.5 90 22.5 85 8C84.4 3.4 86.5 2.5 89.5 2.5H168C171.5 2.5 172.6 4 173.6 6.5L183.5 22.5Z" fill="url(#tg136)" stroke="#a4a4a4"/><path d="M1.5 22.5V5.5C1.5 2 3.5 .5 6 .5H77C81 .5 82.6 2.4 83.8 5L91 22.5" fill="#fff" stroke="#a6a6a6"/></svg>
<span class="t " style="left:42.8px;top:139.6px;">Traductions</span>
<span class="t " style="left:125.3px;top:139.6px;">Documentation</span>
<div class="a nh" style="left:27px;top:158px;width:985px;height:22px"></div>
<span class="t " style="left:55.8px;top:162.5px;">Src</span>
<span class="t " style="left:82.8px;top:162.5px;">Cbl</span>
<span class="t " style="left:162.8px;top:162.5px;">Nom du fichier</span>
<span class="t r " style="right:177.3px;top:162.5px;">Octets</span>
<span class="t r " style="right:142.8px;top:162.5px;">Mots</span>
<span class="t r " style="right:83.8px;top:162.5px;">Caractères</span>
<span class="t " style="left:951.8px;top:162.5px;">Bp</span>
<span class="t r " style="right:19.3px;top:162.5px;">CHF</span>
<div class="a" style="left:27px;top:180px;width:985px;height:1px;background:#8a8a8a;"></div>
<div class="a" style="left:28px;top:181px;width:17px;height:22px;background:#d9d9d9;"></div>
<svg class="a" style="left:56px;top:185.5px" width="15" height="10.6" viewBox="0 0 16 11"><rect width="16" height="11" fill="#000"/><rect y="3.7" width="16" height="3.6" fill="#d80000"/><rect y="7.3" width="16" height="3.7" fill="#ffd200"/><rect x=".5" y=".5" width="15" height="10" fill="none" stroke="#000" stroke-opacity=".55"/></svg>
<svg class="a" style="left:83px;top:185.7px" width="15.2" height="10.2" viewBox="0 0 16 11"><rect width="16" height="11" fill="#1414c8"/><path d="M0 0L16 11M16 0L0 11" stroke="#d8d0f4" stroke-width="1.7"/><path d="M0 0L16 11M16 0L0 11" stroke="#f0506a" stroke-width=".9"/><path d="M8 0V11M0 5.5H16" stroke="#ecd8ec" stroke-width="2.5"/><path d="M8 0V11M0 5.5H16" stroke="#f02838" stroke-width="1.3"/></svg>
<svg class="a" style="left:100.6px;top:185.7px" width="15" height="10.4" viewBox="0 0 16 11"><rect width="16" height="11" fill="#fff"/><rect width="5.4" height="11" fill="#0000f0"/><rect x="10.6" width="5.4" height="11" fill="#f00000"/><rect x=".5" y=".5" width="15" height="10" fill="none" stroke="#222" stroke-opacity=".75"/></svg>
<svg class="a" style="left:118.5px;top:185.7px" width="15" height="10.4" viewBox="0 0 16 11"><rect width="16" height="11" fill="#fff"/><rect width="5.4" height="11" fill="#009246"/><rect x="10.6" width="5.4" height="11" fill="#f00000"/><rect x=".5" y=".5" width="15" height="10" fill="none" stroke="#222" stroke-opacity=".75"/></svg>
<span class="t u" style="left:162.4px;top:184.7px;">slf202512271312_snowweather.HTML</span>
<span class="t r " style="right:177.3px;top:184.7px;">4 904</span>
<span class="t r " style="right:142.8px;top:184.7px;">340</span>
<span class="t r " style="right:83.8px;top:184.7px;">2 034</span>
<svg class="a" style="left:951.8px;top:184.1px" width="12" height="12" viewBox="0 0 12 12"><rect x="1.4" y=".5" width="8.8" height="8.4" rx="2.6" fill="#2626ee"/><ellipse cx="5.8" cy="1.9" rx="2.6" ry=".8" fill="#7a7af8"/><path d="M3 3.6C4.2 4.6 7.4 4.6 8.6 3.6M3 6.2C4.2 7.3 7.4 7.3 8.6 6.2" stroke="#e8e8d8" stroke-width="1" fill="none"/><path d="M4.8 8.6H6.8L7.6 10.6H4Z" fill="#2626ee"/><rect x="2.6" y="10" width="6.4" height="1" fill="#2626ee"/><rect x=".6" y="10.6" width="10.6" height=".7" fill="#a0a090"/></svg>
<span class="t r " style="right:19.3px;top:184.7px;">475.95</span>
<div class="a" style="left:27px;top:158px;width:985px;height:46px;border:1px solid #d0d0d0;border-top-color:#dcdcdc;box-sizing:border-box"></div>
<svg class="a" style="left:25.6px;top:249px" width="200" height="23" viewBox="0 0 200 23"><defs><linearGradient id="tg249" x1="0" y1="0" x2="0" y2="1"><stop offset="0" stop-color="#f8f8f8"/><stop offset="1" stop-color="#e4e4e4"/></linearGradient></defs><path d="M1.5 22.5V5.5C1.5 2 3.5 .5 6 .5H68C71.6 .5 72.8 2 74 4.5L82.8 22.5" fill="#fff" stroke="#a6a6a6"/></svg>
<span class="t " style="left:42.8px;top:253.6px;">Traductions</span>
<div class="a nh" style="left:27px;top:271px;width:985px;height:22px"></div>
<span class="t " style="left:55.8px;top:275.5px;">Src</span>
<span class="t " style="left:82.8px;top:275.5px;">Cbl</span>
<span class="t " style="left:162.8px;top:275.5px;">Nom du fichier</span>
<span class="t r " style="right:177.3px;top:275.5px;">Octets</span>
<span class="t r " style="right:142.8px;top:275.5px;">Mots</span>
<span class="t r " style="right:83.8px;top:275.5px;">Caractères</span>
<span class="t " style="left:951.8px;top:275.5px;">Bp</span>
<span class="t r " style="right:19.3px;top:275.5px;">CHF</span>
<div class="a" style="left:27px;top:292px;width:985px;height:1px;background:#8a8a8a;"></div>
<div class="a" style="left:28px;top:293px;width:17px;height:108.5px;background:#d9d9d9;"></div>
<svg class="a" style="left:56px;top:298.3px" width="15" height="10.6" viewBox="0 0 16 11"><rect width="16" height="11" fill="#000"/><rect y="3.7" width="16" height="3.6" fill="#d80000"/><rect y="7.3" width="16" height="3.7" fill="#ffd200"/><rect x=".5" y=".5" width="15" height="10" fill="none" stroke="#000" stroke-opacity=".55"/></svg>
<svg class="a" style="left:83px;top:298.5px" width="15.2" height="10.2" viewBox="0 0 16 11"><rect width="16" height="11" fill="#1414c8"/><path d="M0 0L16 11M16 0L0 11" stroke="#d8d0f4" stroke-width="1.7"/><path d="M0 0L16 11M16 0L0 11" stroke="#f0506a" stroke-width=".9"/><path d="M8 0V11M0 5.5H16" stroke="#ecd8ec" stroke-width="2.5"/><path d="M8 0V11M0 5.5H16" stroke="#f02838" stroke-width="1.3"/></svg>
<svg class="a" style="left:100.6px;top:298.5px" width="15" height="10.4" viewBox="0 0 16 11"><rect width="16" height="11" fill="#fff"/><rect width="5.4" height="11" fill="#0000f0"/><rect x="10.6" width="5.4" height="11" fill="#f00000"/><rect x=".5" y=".5" width="15" height="10" fill="none" stroke="#222" stroke-opacity=".75"/></svg>
<svg class="a" style="left:118.5px;top:298.5px" width="15" height="10.4" viewBox="0 0 16 11"><rect width="16" height="11" fill="#fff"/><rect width="5.4" height="11" fill="#009246"/><rect x="10.6" width="5.4" height="11" fill="#f00000"/><rect x=".5" y=".5" width="15" height="10" fill="none" stroke="#222" stroke-opacity=".75"/></svg>
<span class="t u" style="left:162.4px;top:297.5px;">slf202512251314_snowweather.HTML</span>
<span class="t r " style="right:177.3px;top:297.5px;">5 472</span>
<span class="t r " style="right:142.8px;top:297.5px;">388</span>
<span class="t r " style="right:83.8px;top:297.5px;">2 322</span>
<svg class="a" style="left:951.8px;top:296.9px" width="12" height="12" viewBox="0 0 12 12"><rect x="1.4" y=".5" width="8.8" height="8.4" rx="2.6" fill="#2626ee"/><ellipse cx="5.8" cy="1.9" rx="2.6" ry=".8" fill="#7a7af8"/><path d="M3 3.6C4.2 4.6 7.4 4.6 8.6 3.6M3 6.2C4.2 7.3 7.4 7.3 8.6 6.2" stroke="#e8e8d8" stroke-width="1" fill="none"/><path d="M4.8 8.6H6.8L7.6 10.6H4Z" fill="#2626ee"/><rect x="2.6" y="10" width="6.4" height="1" fill="#2626ee"/><rect x=".6" y="10.6" width="10.6" height=".7" fill="#a0a090"/></svg>
<span class="t r " style="right:19.3px;top:297.5px;">543.30</span>
<div class="a" style="left:27px;top:271px;width:985px;height:131px;border:1px solid #d0d0d0;border-top-color:#dcdcdc;box-sizing:border-box"></div>
<div class="a nh" style="left:46px;top:316px;width:965px;height:22px"></div>
<div class="a" style="left:46px;top:338px;width:965px;height:1px;background:#959595;"></div>
<span class="t " style="left:52px;top:320.5px;">Cbl</span>
<span class="t " style="left:170.3px;top:320.5px;color:#888;font-size:10.8px">⇐</span>
<span class="t " style="left:196.4px;top:320.5px;">Nom du fichier</span>
<span class="t " style="left:424.8px;top:320.5px;">Traducteur</span>
<span class="t " style="left:770.6px;top:320.5px;">Envoyé</span>
<span class="t r " style="right:141.8px;top:320.5px;">Mots</span>
<span class="t r " style="right:83.8px;top:320.5px;">Caractères</span>
<span class="t " style="left:951.8px;top:320.5px;">BP</span>
<span class="t r " style="right:19.3px;top:320.5px;">CHF</span>
<svg class="a" style="left:57.8px;top:342.9px" width="15.2" height="10" viewBox="0 0 16 11"><rect width="16" height="11" fill="#fff"/><rect width="5.4" height="11" fill="#0000f0"/><rect x="10.6" width="5.4" height="11" fill="#f00000"/><rect x=".5" y=".5" width="15" height="10" fill="none" stroke="#222" stroke-opacity=".75"/></svg>
<svg class="a" style="left:169.4px;top:342.4px" width="16" height="10" viewBox="0 0 16 10"><ellipse cx="8" cy="5" rx="7.1" ry="4.2" fill="#fff" stroke="#111" stroke-width="1.4"/><path d="M4.6 5L9.4 2.4A3 3 0 0 1 9.4 7.6Z" fill="#1c1cf0"/></svg>
<span class="t u" style="left:196.4px;top:342px;">slf202512251314_snowweather_FRE.html</span>
<span class="t " style="left:424.8px;top:342px;">Teller Léon</span>
<span class="t " style="left:770.6px;top:342px;">25.12.25 14:42</span>
<span class="t r " style="right:141.8px;top:342px;">630</span>
<span class="t r " style="right:83.8px;top:342px;">2 982</span>
<svg class="a" style="left:951.8px;top:341.8px" width="12" height="12" viewBox="0 0 12 12"><rect x="1.4" y=".5" width="8.8" height="8.4" rx="2.6" fill="#2626ee"/><ellipse cx="5.8" cy="1.9" rx="2.6" ry=".8" fill="#7a7af8"/><path d="M3 3.6C4.2 4.6 7.4 4.6 8.6 3.6M3 6.2C4.2 7.3 7.4 7.3 8.6 6.2" stroke="#e8e8d8" stroke-width="1" fill="none"/><path d="M4.8 8.6H6.8L7.6 10.6H4Z" fill="#2626ee"/><rect x="2.6" y="10" width="6.4" height="1" fill="#2626ee"/><rect x=".6" y="10.6" width="10.6" height=".7" fill="#a0a090"/></svg>
<span class="t r " style="right:19.3px;top:342px;">181.10</span>
<div class="a" style="left:47px;top:359.3px;width:964px;height:20px;background:#f2f2f2;"></div>
<svg class="a" style="left:57.8px;top:363.2px" width="15.2" height="10" viewBox="0 0 16 11"><rect width="16" height="11" fill="#fff"/><rect width="5.4" height="11" fill="#009246"/><rect x="10.6" width="5.4" height="11" fill="#f00000"/><rect x=".5" y=".5" width="15" height="10" fill="none" stroke="#222" stroke-opacity=".75"/></svg>
<svg class="a" style="left:169.4px;top:362.7px" width="16" height="10" viewBox="0 0 16 10"><ellipse cx="8" cy="5" rx="7.1" ry="4.2" fill="#fff" stroke="#111" stroke-width="1.4"/><path d="M4.6 5L9.4 2.4A3 3 0 0 1 9.4 7.6Z" fill="#1c1cf0"/></svg>
<span class="t u" style="left:196.4px;top:362.3px;">slf202512251314_snowweather_ITA.html</span>
<span class="t " style="left:424.8px;top:362.3px;">Bertocchi Andrea</span>
<span class="t " style="left:770.6px;top:362.3px;">25.12.25 15:12</span>
<span class="t r " style="right:141.8px;top:362.3px;">575</span>
<span class="t r " style="right:83.8px;top:362.3px;">2 928</span>
<svg class="a" style="left:951.8px;top:362.1px" width="12" height="12" viewBox="0 0 12 12"><rect x="1.4" y=".5" width="8.8" height="8.4" rx="2.6" fill="#2626ee"/><ellipse cx="5.8" cy="1.9" rx="2.6" ry=".8" fill="#7a7af8"/><path d="M3 3.6C4.2 4.6 7.4 4.6 8.6 3.6M3 6.2C4.2 7.3 7.4 7.3 8.6 6.2" stroke="#e8e8d8" stroke-width="1" fill="none"/><path d="M4.8 8.6H6.8L7.6 10.6H4Z" fill="#2626ee"/><rect x="2.6" y="10" width="6.4" height="1" fill="#2626ee"/><rect x=".6" y="10.6" width="10.6" height=".7" fill="#a0a090"/></svg>
<span class="t r " style="right:19.3px;top:362.3px;">181.10</span>
<svg class="a" style="left:57.8px;top:383.5px" width="15.2" height="10" viewBox="0 0 16 11"><rect width="16" height="11" fill="#1414c8"/><path d="M0 0L16 11M16 0L0 11" stroke="#d8d0f4" stroke-width="1.7"/><path d="M0 0L16 11M16 0L0 11" stroke="#f0506a" stroke-width=".9"/><path d="M8 0V11M0 5.5H16" stroke="#ecd8ec" stroke-width="2.5"/><path d="M8 0V11M0 5.5H16" stroke="#f02838" stroke-width="1.3"/></svg>
<svg class="a" style="left:169.4px;top:383px" width="16" height="10" viewBox="0 0 16 10"><ellipse cx="8" cy="5" rx="7.1" ry="4.2" fill="#fff" stroke="#111" stroke-width="1.4"/><path d="M4.6 5L9.4 2.4A3 3 0 0 1 9.4 7.6Z" fill="#1c1cf0"/></svg>
<span class="t u" style="left:196.4px;top:382.6px;">slf202512251314_snowweather_GBE.html</span>
<span class="t " style="left:424.8px;top:382.6px;">Earis Helen</span>
<span class="t " style="left:770.6px;top:382.6px;">25.12.25 14:36</span>
<span class="t r " style="right:141.8px;top:382.6px;">527</span>
<span class="t r " style="right:83.8px;top:382.6px;">2 495</span>
<svg class="a" style="left:951.8px;top:382.4px" width="12" height="12" viewBox="0 0 12 12"><rect x="1.4" y=".5" width="8.8" height="8.4" rx="2.6" fill="#2626ee"/><ellipse cx="5.8" cy="1.9" rx="2.6" ry=".8" fill="#7a7af8"/><path d="M3 3.6C4.2 4.6 7.4 4.6 8.6 3.6M3 6.2C4.2 7.3 7.4 7.3 8.6 6.2" stroke="#e8e8d8" stroke-width="1" fill="none"/><path d="M4.8 8.6H6.8L7.6 10.6H4Z" fill="#2626ee"/><rect x="2.6" y="10" width="6.4" height="1" fill="#2626ee"/><rect x=".6" y="10.6" width="10.6" height=".7" fill="#a0a090"/></svg>
<span class="t r " style="right:19.3px;top:382.6px;">181.10</span>
<div class="a" style="left:46px;top:316px;width:966px;height:84px;border:1px solid #b4b4b4;border-top-color:#d8d8d8;box-sizing:border-box"></div>
<div class="a" style="left:9px;top:730px;width:1004px;height:1px;background:#dcdcdc;"></div>
<div class="a" style="left:9px;top:731px;width:1004px;height:1px;background:#a8a8a8;"></div>
<div class="a" style="left:9px;top:732px;width:1004px;height:27px;background:#eeeeee;"></div>
<div class="a" style="left:40px;top:732px;width:1px;height:27px;background:#fafafa;"></div>
<svg class="a" style="left:49px;top:735.5px" width="18" height="18" viewBox="0 0 18 18"><defs><linearGradient id="pb49" x1="0" y1="0" x2="0" y2="1"><stop offset="0" stop-color="#e9e9e9"/><stop offset="1" stop-color="#d2d2d2"/></linearGradient></defs><rect x=".5" y=".5" width="17" height="17" rx="2" fill="url(#pb49)" stroke="#c9c9c9"/><path d="M6.4 5.6V12.4" stroke="#727272" stroke-width="1.3"/><path d="M7.6 9L11.4 5.6V12.4Z" fill="#727272"/></svg>
<svg class="a" style="left:68px;top:735.5px" width="18.4" height="18" viewBox="0 0 18.4 18"><defs><linearGradient id="pb68" x1="0" y1="0" x2="0" y2="1"><stop offset="0" stop-color="#e9e9e9"/><stop offset="1" stop-color="#d2d2d2"/></linearGradient></defs><rect x=".5" y=".5" width="17.4" height="17" rx="2" fill="url(#pb68)" stroke="#c9c9c9"/><path d="M7 9L10.8 5.4V12.6Z" fill="#727272"/></svg>
<div class="a" style="left:88px;top:735.5px;width:12.5px;height:18px;box-sizing:border-box;border:1px solid #aaa;border-left-color:#ddd;border-radius:2px;background:#fff"></div>
<span class="t c" style="left:94.4px;top:738.3px;width:40px;margin-left:-20px;">1</span>
<span class="t c" style="left:108px;top:738.3px;width:40px;margin-left:-20px;">2</span>
<span class="t c" style="left:121.9px;top:738.3px;width:40px;margin-left:-20px;">3</span>
<span class="t c" style="left:135.4px;top:738.3px;width:40px;margin-left:-20px;">4</span>
<span class="t c" style="left:149.3px;top:738.3px;width:40px;margin-left:-20px;">5</span>
<span class="t c" style="left:163px;top:738.3px;width:40px;margin-left:-20px;">6</span>
<span class="t c" style="left:176.7px;top:738.3px;width:40px;margin-left:-20px;">7</span>
<span class="t c" style="left:190.4px;top:738.3px;width:40px;margin-left:-20px;">8</span>
<span class="t c" style="left:204.4px;top:738.3px;width:40px;margin-left:-20px;">9</span>
<span class="t c" style="left:220.9px;top:738.3px;width:40px;margin-left:-20px;">10</span>
<span class="t c" style="left:237.6px;top:738.3px;width:40px;margin-left:-20px;">...</span>
<svg class="a" style="left:246px;top:735.5px" width="17.6" height="18" viewBox="0 0 17.6 18"><defs><linearGradient id="pb246" x1="0" y1="0" x2="0" y2="1"><stop offset="0" stop-color="#e9e9e9"/><stop offset="1" stop-color="#d2d2d2"/></linearGradient></defs><rect x=".5" y=".5" width="16.6" height="17" rx="2" fill="url(#pb246)" stroke="#c9c9c9"/><path d="M11 9L7.2 5.4V12.6Z" fill="#727272"/></svg>
<svg class="a" style="left:265.2px;top:735.5px" width="18.2" height="18" viewBox="0 0 18.2 18"><defs><linearGradient id="pb265" x1="0" y1="0" x2="0" y2="1"><stop offset="0" stop-color="#e9e9e9"/><stop offset="1" stop-color="#d2d2d2"/></linearGradient></defs><rect x=".5" y=".5" width="17.2" height="17" rx="2" fill="url(#pb265)" stroke="#c9c9c9"/><path d="M11.7 5.6V12.4" stroke="#727272" stroke-width="1.3"/><path d="M10.5 9L6.7 5.6V12.4Z" fill="#727272"/></svg>
<span class="t " style="left:300.6px;top:738.3px;">Taille de la page</span>
<div class="a" style="left:374px;top:735.5px;width:38.5px;height:18px;box-sizing:border-box;border:1px solid #b8b8b8;border-radius:2px;background:linear-gradient(#fff,#f0f0f0)"></div>
<span class="t " style="left:379.3px;top:738.3px;">18</span>
<svg class="a" style="left:401px;top:742.6px" width="7" height="4.4" viewBox="0 0 8 5"><path d="M.4 .4H7.6L4 4.6Z" fill="#222"/></svg>
<span class="t r " style="right:19.3px;top:738.3px;color:#666">Page 1 de 343, Commandes 1 à 18 de 6166</span>
<svg class="a" style="left:0;top:0" width="60" height="768" viewBox="0 0 60 768"><path d="M14.5 125.2L17.8 128.6L21.1 125.2" fill="none" stroke="#707070" stroke-width="1.9"/><path d="M15.9 213.85L19.3 217.15L15.9 220.45" fill="none" stroke="#707070" stroke-width="1.9"/><path d="M14.5 237.25L17.8 240.65L21.1 237.25" fill="none" stroke="#707070" stroke-width="1.9"/><path d="M15.9 412.85L19.3 416.15L15.9 419.45" fill="none" stroke="#707070" stroke-width="1.9"/><path d="M15.9 434.85L19.3 438.15L15.9 441.45" fill="none" stroke="#707070" stroke-width="1.9"/><path d="M15.9 456.85L19.3 460.15L15.9 463.45" fill="none" stroke="#707070" stroke-width="1.9"/><path d="M15.9 478.85L19.3 482.15L15.9 485.45" fill="none" stroke="#707070" stroke-width="1.9"/><path d="M15.9 499.85L19.3 503.15L15.9 506.45" fill="none" stroke="#707070" stroke-width="1.9"/><path d="M15.9 521.85L19.3 525.15L15.9 528.45" fill="none" stroke="#707070" stroke-width="1.9"/><path d="M15.9 543.85L19.3 547.15L15.9 550.45" fill="none" stroke="#707070" stroke-width="1.9"/><path d="M15.9 565.85L19.3 569.15L15.9 572.45" fill="none" stroke="#707070" stroke-width="1.9"/><path d="M15.9 587.85L19.3 591.15L15.9 594.45" fill="none" stroke="#707070" stroke-width="1.9"/><path d="M15.9 609.85L19.3 613.15L15.9 616.45" fill="none" stroke="#707070" stroke-width="1.9"/><path d="M15.9 631.85L19.3 635.15L15.9 638.45" fill="none" stroke="#707070" stroke-width="1.9"/><path d="M15.9 652.85L19.3 656.15L15.9 659.45" fill="none" stroke="#707070" stroke-width="1.9"/><path d="M15.9 674.85L19.3 678.15L15.9 681.45" fill="none" stroke="#707070" stroke-width="1.9"/><path d="M15.9 696.85L19.3 700.15L15.9 703.45" fill="none" stroke="#707070" stroke-width="1.9"/><path d="M15.9 718.85L19.3 722.15L15.9 725.45" fill="none" stroke="#707070" stroke-width="1.9"/><path d="M34.9 190L38.3 193.3L34.9 196.6" fill="none" stroke="#707070" stroke-width="1.9"/><path d="M33.5 304.2L36.8 307.6L40.1 304.2" fill="none" stroke="#707070" stroke-width="1.9"/></svg>
</body></html>
